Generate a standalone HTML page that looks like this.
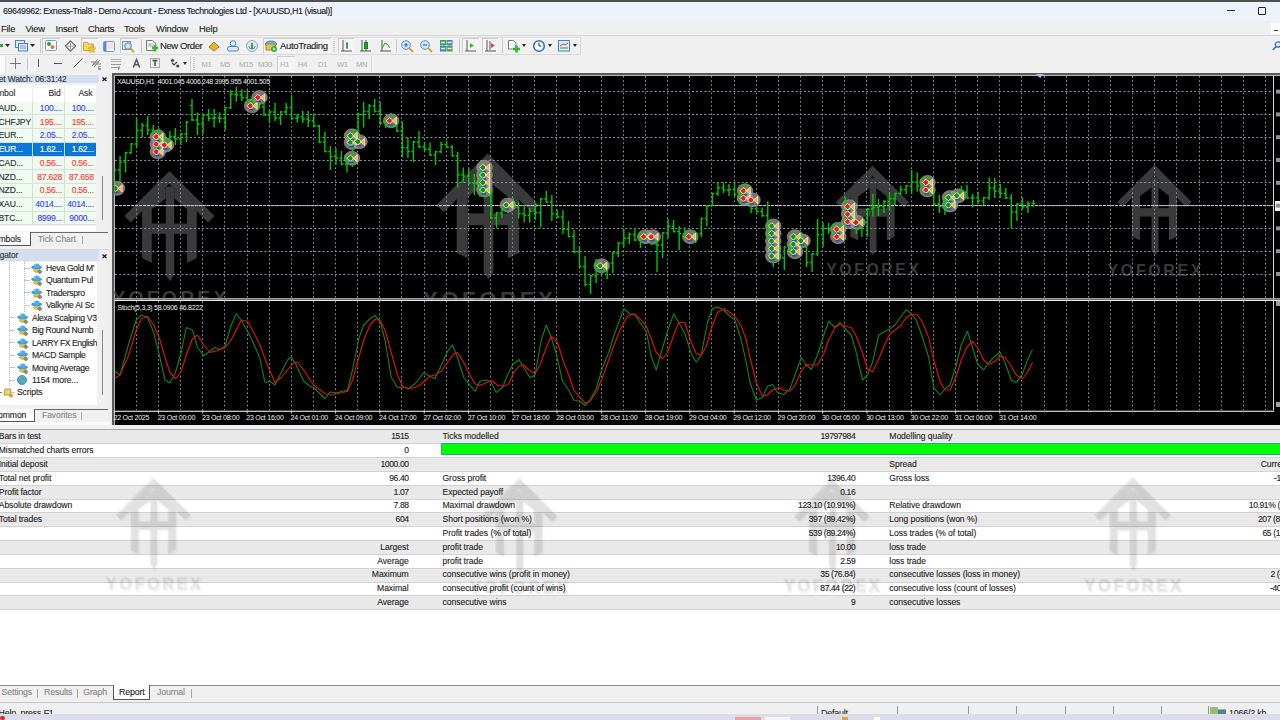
<!DOCTYPE html>
<html><head><meta charset="utf-8">
<style>
*{margin:0;padding:0;box-sizing:border-box}
html,body{width:1280px;height:720px;overflow:hidden;background:#f0f0f0;font-family:"Liberation Sans",sans-serif;color:#1a1a1a;position:relative}
.a{position:absolute;white-space:nowrap;line-height:1;-webkit-text-stroke:0.12px currentColor}
svg{position:absolute;overflow:visible}
</style></head><body>
<div class="a" style="left:0px;top:0px;width:1280px;height:2px;background:#505050;"></div>
<div class="a" style="left:0px;top:2px;width:1280px;height:18.5px;background:#eef2fa;"></div>
<div class="a" style="left:3.00px;top:7.37px;font-size:8.9px;letter-spacing:-0.41px;color:#202020;font-weight:normal;">69649962: Exness-Trial8 - Demo Account - Exness Technologies Ltd - [XAUUSD,H1 (visual)]</div>
<div class="a" style="left:1227px;top:10px;width:7.5px;height:1px;background:#333;"></div>
<div class="a" style="left:1258px;top:7px;width:7.5px;height:7.5px;background:transparent;border:1.3px solid #222;border-radius:1px"></div>
<div class="a" style="left:0px;top:20.5px;width:1280px;height:15px;background:#f0f0f0;"></div>
<div class="a" style="left:1.00px;top:23.54px;font-size:9.4px;letter-spacing:-0.22px;color:#1e1e1e;font-weight:normal;">File</div>
<div class="a" style="left:25.50px;top:23.54px;font-size:9.4px;letter-spacing:-0.22px;color:#1e1e1e;font-weight:normal;">View</div>
<div class="a" style="left:55.50px;top:23.54px;font-size:9.4px;letter-spacing:-0.22px;color:#1e1e1e;font-weight:normal;">Insert</div>
<div class="a" style="left:88.00px;top:23.54px;font-size:9.4px;letter-spacing:-0.22px;color:#1e1e1e;font-weight:normal;">Charts</div>
<div class="a" style="left:124.00px;top:23.54px;font-size:9.4px;letter-spacing:-0.22px;color:#1e1e1e;font-weight:normal;">Tools</div>
<div class="a" style="left:156.00px;top:23.54px;font-size:9.4px;letter-spacing:-0.22px;color:#1e1e1e;font-weight:normal;">Window</div>
<div class="a" style="left:199.00px;top:23.54px;font-size:9.4px;letter-spacing:-0.22px;color:#1e1e1e;font-weight:normal;">Help</div>
<div class="a" style="left:1271px;top:23px;width:9px;height:11px;background:#ffffff;"></div>
<div class="a" style="left:1274px;top:30px;width:4px;height:1px;background:#444;"></div>
<div class="a" style="left:0px;top:35px;width:1280px;height:1px;background:#d6d6d6;"></div>
<div class="a" style="left:0px;top:36px;width:1280px;height:37px;background:#f0f0f0;"></div>
<div class="a" style="left:-2px;top:37px;width:583px;height:18px;background:transparent;border:1px solid #dadada;border-left:none"></div>
<div class="a" style="left:-2px;top:38px;width:582px;height:16px;background:#f0f0f0;border-top:1px solid #fbfbfb"></div>
<div class="a" style="left:0px;top:44px;width:3px;height:3px;background:#3aa63a;"></div>
<svg style="left:5px;top:44px" width="5" height="3" viewBox="0 0 5 3"><path d="M0 0H5L2.5 3Z" fill="#222"/></svg>
<svg style="left:15px;top:40px" width="13" height="12" viewBox="0 0 13 12"><rect x="0.5" y="0.5" width="9" height="7" fill="#dfe9f7" stroke="#4a7fc1"/><rect x="3.5" y="3.5" width="9" height="7.5" fill="#dfe9f7" stroke="#4a7fc1"/><path d="M5 6h6M5 8h6" stroke="#7a9fd0"/></svg>
<svg style="left:30px;top:44px" width="5" height="3" viewBox="0 0 5 3"><path d="M0 0H5L2.5 3Z" fill="#222"/></svg>
<div class="a" style="left:39.5px;top:39px;width:1px;height:14px;background:#c8c8c8;"></div>
<div class="a" style="left:42px;top:38px;width:18px;height:15px;background:#f4f4f4;border-top:1.3px solid #cdcdcd;border-left:1.3px solid #cdcdcd"></div>
<svg style="left:45px;top:40px" width="12" height="11" viewBox="0 0 12 11"><rect x="0.5" y="0.5" width="11" height="10" fill="#fff" stroke="#6b9ad6" rx="1"/><circle cx="4" cy="4" r="2" fill="#2fa02f"/><circle cx="7.5" cy="7" r="2" fill="#e8704a"/></svg>
<svg style="left:64px;top:40px" width="13" height="12" viewBox="0 0 13 12"><path d="M6.5 0.8L11.7 6 6.5 11.2 1.3 6Z" fill="none" stroke="#666" stroke-width="1.1"/><path d="M6.5 2.5v7M3 6h7" stroke="#888" stroke-width=".7"/></svg>
<div class="a" style="left:81px;top:38px;width:17px;height:15px;background:#f4f4f4;border-top:1.3px solid #cdcdcd;border-left:1.3px solid #cdcdcd"></div>
<svg style="left:83px;top:40px" width="13" height="12" viewBox="0 0 13 12"><path d="M0.5 2.5h4l1 1.5h5v6.5h-10z" fill="#f3d86b" stroke="#c9a43a"/><path d="M9 5l1.2 2.6 2.8.3-2.1 1.9.6 2.8L9 11.2l-2.5 1.4.6-2.8-2.1-1.9 2.8-.3z" fill="#f6c62c" stroke="#c99a1a" stroke-width=".6"/></svg>
<svg style="left:103px;top:41px" width="12" height="11" viewBox="0 0 12 11"><rect x="0.5" y="0.5" width="11" height="10" rx="1.2" fill="#fff" stroke="#6a9ad8"/><rect x="1" y="1" width="2.5" height="9" fill="#5a8ad0"/><path d="M4.5 3h6M4.5 5h6M4.5 7h6" stroke="#d8a0a0" stroke-width=".6"/></svg>
<div class="a" style="left:120px;top:38px;width:17.5px;height:15px;background:#f4f4f4;border-top:1.3px solid #cdcdcd;border-left:1.3px solid #cdcdcd"></div>
<svg style="left:122px;top:40px" width="14" height="13" viewBox="0 0 14 13"><rect x="0.5" y="1.5" width="8" height="8" fill="#e9f0fb" stroke="#7a8fb0"/><circle cx="6" cy="6" r="3.3" fill="#cfe3fa" stroke="#4f7fbf"/><path d="M8.5 8.5l3.5 3.5" stroke="#d49b2a" stroke-width="1.8"/></svg>
<div class="a" style="left:140.5px;top:39px;width:1px;height:14px;background:#c8c8c8;"></div>
<svg style="left:146px;top:40px" width="13" height="13" viewBox="0 0 13 13"><path d="M0.5 0.5h6l3 3v7h-9z" fill="#fff" stroke="#777"/><path d="M2 4h5M2 6h5" stroke="#999"/><path d="M6 8h6M9 5v6.5" stroke="#2db82d" stroke-width="2.6"/></svg>
<div class="a" style="left:160.00px;top:41.07px;font-size:9.6px;letter-spacing:-0.45px;color:#1e1e1e;font-weight:normal;">New Order</div>
<svg style="left:208px;top:41px" width="12" height="11" viewBox="0 0 12 11"><path d="M1 6l5-5 5 5-5 4z" fill="#e8b437" stroke="#a97a1e"/></svg>
<svg style="left:227px;top:40px" width="12" height="12" viewBox="0 0 12 12"><circle cx="6" cy="3.5" r="2.8" fill="#dfe9f7" stroke="#4a7fc1"/><rect x="0.5" y="6.5" width="11" height="4.5" rx="2" fill="#dfe9f7" stroke="#4a7fc1"/></svg>
<svg style="left:246px;top:40px" width="12" height="12" viewBox="0 0 12 12"><circle cx="6" cy="6" r="5.5" fill="#dde6f0" stroke="#8fa7c0"/><path d="M6 3v6" stroke="#3aa03a" stroke-width="2"/><path d="M3 6a3 3 0 0 0 6 0" stroke="#4f7fbf" fill="none"/></svg>
<div class="a" style="left:263px;top:38px;width:67.5px;height:15px;background:#f4f4f4;border-top:1.3px solid #cdcdcd;border-left:1.3px solid #cdcdcd"></div>
<svg style="left:265px;top:40px" width="12" height="12" viewBox="0 0 12 12"><ellipse cx="6" cy="4" rx="5.5" ry="3" fill="#6fb6e8" stroke="#3f7fb8"/><rect x="1" y="4" width="9" height="6" fill="#e6c25a" stroke="#a88a2a"/><circle cx="9" cy="9" r="3" fill="#2db82d"/><path d="M8 7.5l2.5 1.5L8 10.5z" fill="#fff"/></svg>
<div class="a" style="left:280.00px;top:41.07px;font-size:9.6px;letter-spacing:-0.38px;color:#1e1e1e;font-weight:normal;">AutoTrading</div>
<svg style="left:333px;top:39px" width="2" height="14" viewBox="0 0 2 14"><path d="M1 0v14" stroke="#b0b0b0" stroke-dasharray="1,1"/></svg>
<div class="a" style="left:337.5px;top:38px;width:16.5px;height:15px;background:#f4f4f4;border-top:1.3px solid #cdcdcd;border-left:1.3px solid #cdcdcd"></div>
<svg style="left:341px;top:40px" width="11" height="12" viewBox="0 0 11 12"><path d="M2 0v11M0 11h11M6 2v7" stroke="#555"/><path d="M6 3v5" stroke="#2a9a2a" stroke-width="1.5"/></svg>
<svg style="left:360px;top:40px" width="11" height="12" viewBox="0 0 11 12"><path d="M2 0v11M0 11h11" stroke="#555"/><rect x="4.5" y="2.5" width="3" height="6" fill="#3cb83c" stroke="#2a7a2a"/><path d="M6 0v11" stroke="#2a7a2a"/></svg>
<svg style="left:380px;top:40px" width="11" height="12" viewBox="0 0 11 12"><path d="M2 0v11M0 11h11" stroke="#555"/><path d="M2 8l3-5 3 2 2 3" stroke="#3aa03a" fill="none"/></svg>
<div class="a" style="left:396px;top:39px;width:1px;height:14px;background:#c8c8c8;"></div>
<svg style="left:401px;top:40px" width="13" height="13" viewBox="0 0 13 13"><circle cx="5" cy="5" r="4.3" fill="#d5e8fb" stroke="#4a8fd6"/><path d="M3 5h4M5 3v4" stroke="#2a6fc0" stroke-width="1.2"/><path d="M8 8l4 4" stroke="#d2a13a" stroke-width="2"/></svg>
<svg style="left:420px;top:40px" width="13" height="13" viewBox="0 0 13 13"><circle cx="5" cy="5" r="4.3" fill="#d5e8fb" stroke="#4a8fd6"/><path d="M3 5h4" stroke="#2a6fc0" stroke-width="1.2"/><path d="M8 8l4 4" stroke="#d2a13a" stroke-width="2"/></svg>
<svg style="left:440px;top:40px" width="13" height="12" viewBox="0 0 13 12"><rect x="0" y="0" width="6" height="5.5" fill="#3aa33a"/><rect x="6.5" y="0" width="6" height="5.5" fill="#3f7fd0"/><rect x="0" y="6" width="6" height="5.5" fill="#3f7fd0"/><rect x="6.5" y="6" width="6" height="5.5" fill="#3aa33a"/><path d="M1 2.5h4M7.5 2.5h4M1 8.5h4M7.5 8.5h4" stroke="#fff" stroke-width="1.4"/></svg>
<div class="a" style="left:458.5px;top:39px;width:1px;height:14px;background:#c8c8c8;"></div>
<div class="a" style="left:462px;top:38px;width:17px;height:15px;background:#f4f4f4;border-top:1.3px solid #cdcdcd;border-left:1.3px solid #cdcdcd"></div>
<svg style="left:465px;top:40px" width="11" height="12" viewBox="0 0 11 12"><path d="M2 0v11M0 11h11" stroke="#555"/><path d="M5 3l4 2.5L5 8z" fill="#2db82d"/></svg>
<div class="a" style="left:481.5px;top:38px;width:16.5px;height:15px;background:#f4f4f4;border-top:1.3px solid #cdcdcd;border-left:1.3px solid #cdcdcd"></div>
<svg style="left:485px;top:40px" width="11" height="12" viewBox="0 0 11 12"><path d="M2 0v11M0 11h11M5 1v9" stroke="#555"/><path d="M6 3l4 2.5L6 8z" fill="#e04040"/></svg>
<div class="a" style="left:501.5px;top:39px;width:1px;height:14px;background:#c8c8c8;"></div>
<svg style="left:508px;top:40px" width="13" height="13" viewBox="0 0 13 13"><path d="M0.5 0.5h5l2.5 2.5v6h-7.5z" fill="#fff" stroke="#777"/><path d="M5 9h7M8.5 5.5v7" stroke="#2db82d" stroke-width="2.6"/></svg>
<svg style="left:522px;top:44px" width="4" height="3" viewBox="0 0 4 3"><path d="M0 0H4L2 3Z" fill="#222"/></svg>
<svg style="left:533px;top:40px" width="12" height="12" viewBox="0 0 12 12"><circle cx="6" cy="6" r="5.3" fill="#fff" stroke="#2f6fc0" stroke-width="1.6"/><path d="M6 2.5V6h2.5" stroke="#333" fill="none"/></svg>
<svg style="left:548px;top:44px" width="4" height="3" viewBox="0 0 4 3"><path d="M0 0H4L2 3Z" fill="#222"/></svg>
<svg style="left:558px;top:40px" width="12" height="12" viewBox="0 0 12 12"><rect x="0.5" y="0.5" width="11" height="10.5" fill="#dbe8f7" stroke="#4a7fc1"/><path d="M2 6l3-2 2 1 3-2" stroke="#e04040" fill="none"/><path d="M2 8h8" stroke="#3aa03a"/></svg>
<svg style="left:573px;top:44px" width="4" height="3" viewBox="0 0 4 3"><path d="M0 0H4L2 3Z" fill="#222"/></svg>
<svg style="left:1272px;top:41px" width="9" height="10" viewBox="0 0 9 10"><circle cx="6" cy="3.5" r="2.7" fill="none" stroke="#3a6fd0" stroke-width="1.3"/><path d="M4 5.5L1 9" stroke="#3a6fd0" stroke-width="1.6"/></svg>
<div class="a" style="left:0px;top:56px;width:5.5px;height:16px;background:#fafafa;border-right:1px solid #e0e0e0"></div>
<svg style="left:10px;top:58px" width="11" height="11" viewBox="0 0 11 11"><path d="M5.5 0v11M0 5.5h11" stroke="#777"/></svg>
<div class="a" style="left:26.5px;top:57px;width:1px;height:14px;background:#c8c8c8;"></div>
<div class="a" style="left:38px;top:59px;width:1px;height:8px;background:#555;"></div>
<div class="a" style="left:54px;top:63px;width:8px;height:1px;background:#555;"></div>
<svg style="left:73px;top:58px" width="10" height="10" viewBox="0 0 10 10"><path d="M0.5 9.5L9.5 0.5" stroke="#555"/></svg>
<svg style="left:91px;top:57px" width="11" height="13" viewBox="0 0 11 13"><path d="M1 9l6-7M3 10l6-7M0 5h8M2 7h8" stroke="#666" stroke-width=".8"/><text x="7" y="12.5" font-size="5" fill="#555" font-family="Liberation Sans">E</text></svg>
<svg style="left:111px;top:58px" width="11" height="12" viewBox="0 0 11 12"><rect x="0" y="1" width="10" height="1" fill="#b0b0b0"/><rect x="0" y="3" width="10" height="1" fill="#b0b0b0"/><rect x="0" y="6" width="10" height="1" fill="#999"/><rect x="0" y="9" width="8" height="1" fill="#999"/><path d="M8.5 8.5l-1 3" stroke="#666"/></svg>
<svg style="left:132.5px;top:59px" width="7" height="9" viewBox="0 0 7 9"><path d="M0.3 8.5L3.5 0.5 6.7 8.5M1.5 5.7h4" fill="none" stroke="#555" stroke-width="1.5"/></svg>
<svg style="left:150px;top:58px" width="10" height="10" viewBox="0 0 10 10"><rect x="0.5" y="0.5" width="9" height="9" fill="none" stroke="#aaa"/><path d="M2.5 2.5h5M5 2.5V8" stroke="#444" stroke-width="1.4"/></svg>
<svg style="left:170px;top:58px" width="10" height="10" viewBox="0 0 10 10"><path d="M2.5 0.5l2 2-2 2-2-2z" fill="#444"/><path d="M2 5l2 2 3-3" fill="none" stroke="#444" stroke-width="1.2"/><circle cx="7.8" cy="8" r="1.6" fill="#444"/></svg>
<svg style="left:183px;top:62px" width="4" height="3" viewBox="0 0 4 3"><path d="M0 0H4L2 3Z" fill="#222"/></svg>
<div class="a" style="left:190.3px;top:56px;width:1px;height:16px;background:#d0d0d0;"></div>
<svg style="left:193px;top:57px" width="2" height="14" viewBox="0 0 2 14"><path d="M1 0v14" stroke="#b0b0b0" stroke-dasharray="1,1"/></svg>
<div class="a" style="left:277px;top:56px;width:17.5px;height:16px;background:#f4f4f4;border-top:1.3px solid #cdcdcd;border-left:1.3px solid #cdcdcd"></div>
<div class="a" style="left:201.50px;top:60.57px;font-size:7.6px;letter-spacing:-0.3px;color:#b4b4b4;font-weight:normal;">M1</div>
<div class="a" style="left:220.00px;top:60.57px;font-size:7.6px;letter-spacing:-0.3px;color:#b4b4b4;font-weight:normal;">M5</div>
<div class="a" style="left:239.00px;top:60.57px;font-size:7.6px;letter-spacing:-0.3px;color:#b4b4b4;font-weight:normal;">M15</div>
<div class="a" style="left:258.00px;top:60.57px;font-size:7.6px;letter-spacing:-0.3px;color:#b4b4b4;font-weight:normal;">M30</div>
<div class="a" style="left:280.00px;top:60.57px;font-size:7.6px;letter-spacing:-0.3px;color:#b4b4b4;font-weight:normal;">H1</div>
<div class="a" style="left:298.00px;top:60.57px;font-size:7.6px;letter-spacing:-0.3px;color:#b4b4b4;font-weight:normal;">H4</div>
<div class="a" style="left:318.00px;top:60.57px;font-size:7.6px;letter-spacing:-0.3px;color:#b4b4b4;font-weight:normal;">D1</div>
<div class="a" style="left:337.00px;top:60.57px;font-size:7.6px;letter-spacing:-0.3px;color:#b4b4b4;font-weight:normal;">W1</div>
<div class="a" style="left:356.00px;top:60.57px;font-size:7.6px;letter-spacing:-0.3px;color:#b4b4b4;font-weight:normal;">MN</div>
<div class="a" style="left:371px;top:56px;width:1px;height:16px;background:#d8d8d8;"></div>
<div class="a" style="left:0px;top:73px;width:112px;height:352px;background:#f0f0f0;"></div>
<div class="a" style="left:108.5px;top:73px;width:3.5px;height:352px;background:#ececec;"></div>
<div class="a" style="left:0px;top:74.8px;width:99px;height:8.5px;background:#d3dff0;"></div>
<div class="a" style="left:-19.30px;top:74.69px;font-size:8.4px;letter-spacing:-0.12px;color:#303030;font-weight:normal;">Market Watch: 06:31:42</div>
<svg style="left:102.4px;top:77px" width="5" height="4.5" viewBox="0 0 5 4.5"><path d="M0.5 0.5l4 3.5M4.5 0.5l-4 3.5" stroke="#111" stroke-width="1.1"/></svg>
<div class="a" style="left:0px;top:85px;width:95.5px;height:16.5px;background:#ffffff;"></div>
<div class="a" style="left:32px;top:85px;width:1px;height:16.5px;background:#ececec;"></div>
<div class="a" style="left:64px;top:85px;width:1px;height:16.5px;background:#ececec;"></div>
<div class="a" style="left:-12.80px;top:88.72px;font-size:8.6px;letter-spacing:-0.1px;color:#303030;font-weight:normal;">Symbol</div>
<div class="a" style="right:1219.40px;top:88.72px;font-size:8.6px;letter-spacing:-0.1px;color:#303030;font-weight:normal;">Bid</div>
<div class="a" style="right:1187.60px;top:88.72px;font-size:8.6px;letter-spacing:-0.1px;color:#303030;font-weight:normal;">Ask</div>
<div class="a" style="left:0px;top:101.6px;width:96px;height:13.75px;background:#eefbee;"></div>
<div class="a" style="left:0px;top:114.35px;width:96px;height:1px;background:#dcdfdc;"></div>
<div class="a" style="left:31.5px;top:101.6px;width:1px;height:13.75px;background:#d8dcd8;"></div>
<div class="a" style="left:63.5px;top:101.6px;width:1px;height:13.75px;background:#d8dcd8;"></div>
<div class="a" style="left:-1.50px;top:103.92px;font-size:8.6px;letter-spacing:-0.15px;color:#303030;font-weight:normal;">AUD...</div>
<div class="a" style="right:1218.00px;top:103.92px;font-size:8.6px;letter-spacing:-0.25px;color:#3d3dff;font-weight:normal;">100....</div>
<div class="a" style="right:1186.20px;top:103.92px;font-size:8.6px;letter-spacing:-0.25px;color:#3d3dff;font-weight:normal;">100....</div>
<div class="a" style="left:0px;top:115.35px;width:96px;height:13.75px;background:#eefbee;"></div>
<div class="a" style="left:0px;top:128.1px;width:96px;height:1px;background:#dcdfdc;"></div>
<div class="a" style="left:31.5px;top:115.35px;width:1px;height:13.75px;background:#d8dcd8;"></div>
<div class="a" style="left:63.5px;top:115.35px;width:1px;height:13.75px;background:#d8dcd8;"></div>
<div class="a" style="left:-1.50px;top:117.67px;font-size:8.6px;letter-spacing:-0.15px;color:#303030;font-weight:normal;">CHFJPY</div>
<div class="a" style="right:1218.00px;top:117.67px;font-size:8.6px;letter-spacing:-0.25px;color:#ff3a3a;font-weight:normal;">195....</div>
<div class="a" style="right:1186.20px;top:117.67px;font-size:8.6px;letter-spacing:-0.25px;color:#ff3a3a;font-weight:normal;">195....</div>
<div class="a" style="left:0px;top:129.1px;width:96px;height:13.75px;background:#eefbee;"></div>
<div class="a" style="left:0px;top:141.85px;width:96px;height:1px;background:#dcdfdc;"></div>
<div class="a" style="left:31.5px;top:129.1px;width:1px;height:13.75px;background:#d8dcd8;"></div>
<div class="a" style="left:63.5px;top:129.1px;width:1px;height:13.75px;background:#d8dcd8;"></div>
<div class="a" style="left:-1.50px;top:131.42px;font-size:8.6px;letter-spacing:-0.15px;color:#303030;font-weight:normal;">EUR...</div>
<div class="a" style="right:1218.00px;top:131.42px;font-size:8.6px;letter-spacing:-0.25px;color:#3d3dff;font-weight:normal;">2.05...</div>
<div class="a" style="right:1186.20px;top:131.42px;font-size:8.6px;letter-spacing:-0.25px;color:#3d3dff;font-weight:normal;">2.05...</div>
<div class="a" style="left:0px;top:142.85px;width:96px;height:13.75px;background:#0a78d7;"></div>
<div class="a" style="left:0px;top:155.6px;width:96px;height:1px;background:#dcdfdc;"></div>
<div class="a" style="left:31.5px;top:142.85px;width:1px;height:13.75px;background:#d8dcd8;"></div>
<div class="a" style="left:63.5px;top:142.85px;width:1px;height:13.75px;background:#d8dcd8;"></div>
<div class="a" style="left:-1.50px;top:145.17px;font-size:8.6px;letter-spacing:-0.15px;color:#ffffff;font-weight:normal;">EUR...</div>
<div class="a" style="right:1218.00px;top:145.17px;font-size:8.6px;letter-spacing:-0.25px;color:#ffffff;font-weight:normal;">1.62...</div>
<div class="a" style="right:1186.20px;top:145.17px;font-size:8.6px;letter-spacing:-0.25px;color:#ffffff;font-weight:normal;">1.62...</div>
<div class="a" style="left:0px;top:156.6px;width:96px;height:13.75px;background:#eefbee;"></div>
<div class="a" style="left:0px;top:169.35px;width:96px;height:1px;background:#dcdfdc;"></div>
<div class="a" style="left:31.5px;top:156.6px;width:1px;height:13.75px;background:#d8dcd8;"></div>
<div class="a" style="left:63.5px;top:156.6px;width:1px;height:13.75px;background:#d8dcd8;"></div>
<div class="a" style="left:-1.50px;top:158.92px;font-size:8.6px;letter-spacing:-0.15px;color:#303030;font-weight:normal;">CAD...</div>
<div class="a" style="right:1218.00px;top:158.92px;font-size:8.6px;letter-spacing:-0.25px;color:#ff3a3a;font-weight:normal;">0.56...</div>
<div class="a" style="right:1186.20px;top:158.92px;font-size:8.6px;letter-spacing:-0.25px;color:#ff3a3a;font-weight:normal;">0.56...</div>
<div class="a" style="left:0px;top:170.35px;width:96px;height:13.75px;background:#eefbee;"></div>
<div class="a" style="left:0px;top:183.1px;width:96px;height:1px;background:#dcdfdc;"></div>
<div class="a" style="left:31.5px;top:170.35px;width:1px;height:13.75px;background:#d8dcd8;"></div>
<div class="a" style="left:63.5px;top:170.35px;width:1px;height:13.75px;background:#d8dcd8;"></div>
<div class="a" style="left:-1.50px;top:172.67px;font-size:8.6px;letter-spacing:-0.15px;color:#303030;font-weight:normal;">NZD...</div>
<div class="a" style="right:1218.00px;top:172.67px;font-size:8.6px;letter-spacing:-0.25px;color:#ff3a3a;font-weight:normal;">87.628</div>
<div class="a" style="right:1186.20px;top:172.67px;font-size:8.6px;letter-spacing:-0.25px;color:#ff3a3a;font-weight:normal;">87.658</div>
<div class="a" style="left:0px;top:184.1px;width:96px;height:13.75px;background:#eefbee;"></div>
<div class="a" style="left:0px;top:196.85px;width:96px;height:1px;background:#dcdfdc;"></div>
<div class="a" style="left:31.5px;top:184.1px;width:1px;height:13.75px;background:#d8dcd8;"></div>
<div class="a" style="left:63.5px;top:184.1px;width:1px;height:13.75px;background:#d8dcd8;"></div>
<div class="a" style="left:-1.50px;top:186.42px;font-size:8.6px;letter-spacing:-0.15px;color:#303030;font-weight:normal;">NZD...</div>
<div class="a" style="right:1218.00px;top:186.42px;font-size:8.6px;letter-spacing:-0.25px;color:#ff3a3a;font-weight:normal;">0.56...</div>
<div class="a" style="right:1186.20px;top:186.42px;font-size:8.6px;letter-spacing:-0.25px;color:#ff3a3a;font-weight:normal;">0.56...</div>
<div class="a" style="left:0px;top:197.85px;width:96px;height:13.75px;background:#eefbee;"></div>
<div class="a" style="left:0px;top:210.6px;width:96px;height:1px;background:#dcdfdc;"></div>
<div class="a" style="left:31.5px;top:197.85px;width:1px;height:13.75px;background:#d8dcd8;"></div>
<div class="a" style="left:63.5px;top:197.85px;width:1px;height:13.75px;background:#d8dcd8;"></div>
<div class="a" style="left:-1.50px;top:200.17px;font-size:8.6px;letter-spacing:-0.15px;color:#303030;font-weight:normal;">XAU...</div>
<div class="a" style="right:1218.00px;top:200.17px;font-size:8.6px;letter-spacing:-0.25px;color:#3d3dff;font-weight:normal;">4014....</div>
<div class="a" style="right:1186.20px;top:200.17px;font-size:8.6px;letter-spacing:-0.25px;color:#3d3dff;font-weight:normal;">4014....</div>
<div class="a" style="left:0px;top:211.6px;width:96px;height:13.75px;background:#eefbee;"></div>
<div class="a" style="left:0px;top:224.35px;width:96px;height:1px;background:#dcdfdc;"></div>
<div class="a" style="left:31.5px;top:211.6px;width:1px;height:13.75px;background:#d8dcd8;"></div>
<div class="a" style="left:63.5px;top:211.6px;width:1px;height:13.75px;background:#d8dcd8;"></div>
<div class="a" style="left:-1.50px;top:213.92px;font-size:8.6px;letter-spacing:-0.15px;color:#303030;font-weight:normal;">BTC...</div>
<div class="a" style="right:1218.00px;top:213.92px;font-size:8.6px;letter-spacing:-0.25px;color:#3d3dff;font-weight:normal;">8999...</div>
<div class="a" style="right:1186.20px;top:213.92px;font-size:8.6px;letter-spacing:-0.25px;color:#3d3dff;font-weight:normal;">9000...</div>
<div class="a" style="left:0px;top:225.7px;width:96px;height:5px;background:#ffffff;"></div>
<div class="a" style="left:102px;top:176px;width:1.2px;height:44px;background:#888;"></div>
<div class="a" style="left:0px;top:232px;width:108px;height:1.1px;background:#6a6a6a;"></div>
<div class="a" style="left:0px;top:249px;width:108.5px;height:1px;background:#d8d8d8;"></div>
<div class="a" style="left:0px;top:232px;width:31px;height:13.5px;background:#ffffff;border:1px solid #555;border-top:none;border-left:none"></div>
<div class="a" style="left:-11.30px;top:235.22px;font-size:8.6px;letter-spacing:-0.1px;color:#1e1e1e;font-weight:normal;">Symbols</div>
<div class="a" style="left:38.00px;top:235.22px;font-size:8.6px;letter-spacing:-0.1px;color:#888;font-weight:normal;">Tick Chart</div>
<div class="a" style="left:82px;top:236px;width:1px;height:8px;background:#aaa;"></div>
<div class="a" style="left:0px;top:250.2px;width:99px;height:9.5px;background:#d3dff0;"></div>
<div class="a" style="left:-16.50px;top:251.39px;font-size:8.4px;letter-spacing:-0.12px;color:#303030;font-weight:normal;">Navigator</div>
<svg style="left:102.4px;top:253.5px" width="5" height="4.5" viewBox="0 0 5 4.5"><path d="M0.5 0.5l4 3.5M4.5 0.5l-4 3.5" stroke="#111" stroke-width="1.1"/></svg>
<div class="a" style="left:0px;top:259.7px;width:99px;height:1.5px;background:#dcdcdc;"></div>
<div class="a" style="left:0px;top:261.5px;width:97px;height:143.5px;background:#ffffff;"></div>
<svg style="left:0px;top:261px" width="40" height="140" viewBox="0 0 40 140"><path d="M9.5 0V126M24.5 0V52" stroke="#b8b8b8" stroke-width="1" stroke-dasharray="1,1"/><path d="M24 7.5h6M24 19.5h6M24 31.5h6M24 44.5h6M9 56.5h6M9 69.5h6M9 81.5h6M9 94.5h6M9 106.5h6M9 119.5h6M9 131.5h6" stroke="#c4c4c4" stroke-width="1"/></svg>
<div class="a" style="left:0;top:261px;width:96.5px;height:144px;overflow:hidden"><div class="a" style="left:0;top:-261px;width:1px;height:1px">
<svg style="left:31px;top:263.0px" width="12" height="11" viewBox="0 0 12 11"><path d="M2.5 8q3 3 6 0l-.5-3h-5z" fill="#e9c23a" stroke="#b0902a" stroke-width=".5"/><ellipse cx="5.6" cy="4.3" rx="5.4" ry="1.9" fill="#3a9ad6"/><ellipse cx="5.6" cy="3" rx="3.1" ry="2.5" fill="#4aaee4"/><path d="M3 2.6q1-1 2-.8" stroke="#bfe4f8" stroke-width=".7" fill="none"/><path d="M8.8 6.6l2.2 2.2-2.2 2.2-2.2-2.2z" fill="#8a8a8a" stroke="#555" stroke-width=".5"/></svg>
<div class="a" style="left:46.00px;top:263.92px;font-size:8.6px;letter-spacing:-0.3px;color:#1e1e1e;font-weight:normal;">Heva Gold M'</div>
<svg style="left:31px;top:275.45px" width="12" height="11" viewBox="0 0 12 11"><path d="M2.5 8q3 3 6 0l-.5-3h-5z" fill="#e9c23a" stroke="#b0902a" stroke-width=".5"/><ellipse cx="5.6" cy="4.3" rx="5.4" ry="1.9" fill="#3a9ad6"/><ellipse cx="5.6" cy="3" rx="3.1" ry="2.5" fill="#4aaee4"/><path d="M3 2.6q1-1 2-.8" stroke="#bfe4f8" stroke-width=".7" fill="none"/><path d="M8.8 6.6l2.2 2.2-2.2 2.2-2.2-2.2z" fill="#8a8a8a" stroke="#555" stroke-width=".5"/></svg>
<div class="a" style="left:46.00px;top:276.37px;font-size:8.6px;letter-spacing:-0.3px;color:#1e1e1e;font-weight:normal;">Quantum Pul</div>
<svg style="left:31px;top:287.9px" width="12" height="11" viewBox="0 0 12 11"><path d="M2.5 8q3 3 6 0l-.5-3h-5z" fill="#e9c23a" stroke="#b0902a" stroke-width=".5"/><ellipse cx="5.6" cy="4.3" rx="5.4" ry="1.9" fill="#3a9ad6"/><ellipse cx="5.6" cy="3" rx="3.1" ry="2.5" fill="#4aaee4"/><path d="M3 2.6q1-1 2-.8" stroke="#bfe4f8" stroke-width=".7" fill="none"/><path d="M8.8 6.6l2.2 2.2-2.2 2.2-2.2-2.2z" fill="#8a8a8a" stroke="#555" stroke-width=".5"/></svg>
<div class="a" style="left:46.00px;top:288.82px;font-size:8.6px;letter-spacing:-0.3px;color:#1e1e1e;font-weight:normal;">Traderspro</div>
<svg style="left:31px;top:300.35px" width="12" height="11" viewBox="0 0 12 11"><path d="M2.5 8q3 3 6 0l-.5-3h-5z" fill="#e9c23a" stroke="#b0902a" stroke-width=".5"/><ellipse cx="5.6" cy="4.3" rx="5.4" ry="1.9" fill="#3a9ad6"/><ellipse cx="5.6" cy="3" rx="3.1" ry="2.5" fill="#4aaee4"/><path d="M3 2.6q1-1 2-.8" stroke="#bfe4f8" stroke-width=".7" fill="none"/><path d="M8.8 6.6l2.2 2.2-2.2 2.2-2.2-2.2z" fill="#8a8a8a" stroke="#555" stroke-width=".5"/></svg>
<div class="a" style="left:46.00px;top:301.27px;font-size:8.6px;letter-spacing:-0.3px;color:#1e1e1e;font-weight:normal;">Valkyrie AI Sc</div>
<svg style="left:17px;top:312.8px" width="12" height="11" viewBox="0 0 12 11"><path d="M2.5 8q3 3 6 0l-.5-3h-5z" fill="#e9c23a" stroke="#b0902a" stroke-width=".5"/><ellipse cx="5.6" cy="4.3" rx="5.4" ry="1.9" fill="#3a9ad6"/><ellipse cx="5.6" cy="3" rx="3.1" ry="2.5" fill="#4aaee4"/><path d="M3 2.6q1-1 2-.8" stroke="#bfe4f8" stroke-width=".7" fill="none"/><path d="M8.8 6.6l2.2 2.2-2.2 2.2-2.2-2.2z" fill="#8a8a8a" stroke="#555" stroke-width=".5"/></svg>
<div class="a" style="left:32.00px;top:313.72px;font-size:8.6px;letter-spacing:-0.3px;color:#1e1e1e;font-weight:normal;">Alexa Scalping V3</div>
<svg style="left:17px;top:325.25px" width="12" height="11" viewBox="0 0 12 11"><path d="M2.5 8q3 3 6 0l-.5-3h-5z" fill="#e9c23a" stroke="#b0902a" stroke-width=".5"/><ellipse cx="5.6" cy="4.3" rx="5.4" ry="1.9" fill="#3a9ad6"/><ellipse cx="5.6" cy="3" rx="3.1" ry="2.5" fill="#4aaee4"/><path d="M3 2.6q1-1 2-.8" stroke="#bfe4f8" stroke-width=".7" fill="none"/><path d="M8.8 6.6l2.2 2.2-2.2 2.2-2.2-2.2z" fill="#8a8a8a" stroke="#555" stroke-width=".5"/></svg>
<div class="a" style="left:32.00px;top:326.17px;font-size:8.6px;letter-spacing:-0.3px;color:#1e1e1e;font-weight:normal;">Big Round Numb</div>
<svg style="left:17px;top:337.7px" width="12" height="11" viewBox="0 0 12 11"><path d="M2.5 8q3 3 6 0l-.5-3h-5z" fill="#e9c23a" stroke="#b0902a" stroke-width=".5"/><ellipse cx="5.6" cy="4.3" rx="5.4" ry="1.9" fill="#3a9ad6"/><ellipse cx="5.6" cy="3" rx="3.1" ry="2.5" fill="#4aaee4"/><path d="M3 2.6q1-1 2-.8" stroke="#bfe4f8" stroke-width=".7" fill="none"/><path d="M8.8 6.6l2.2 2.2-2.2 2.2-2.2-2.2z" fill="#8a8a8a" stroke="#555" stroke-width=".5"/></svg>
<div class="a" style="left:32.00px;top:338.62px;font-size:8.6px;letter-spacing:-0.45px;color:#1e1e1e;font-weight:normal;">LARRY FX English</div>
<svg style="left:17px;top:350.15px" width="12" height="11" viewBox="0 0 12 11"><path d="M2.5 8q3 3 6 0l-.5-3h-5z" fill="#e9c23a" stroke="#b0902a" stroke-width=".5"/><ellipse cx="5.6" cy="4.3" rx="5.4" ry="1.9" fill="#3a9ad6"/><ellipse cx="5.6" cy="3" rx="3.1" ry="2.5" fill="#4aaee4"/><path d="M3 2.6q1-1 2-.8" stroke="#bfe4f8" stroke-width=".7" fill="none"/><path d="M8.8 6.6l2.2 2.2-2.2 2.2-2.2-2.2z" fill="#8a8a8a" stroke="#555" stroke-width=".5"/></svg>
<div class="a" style="left:32.00px;top:351.07px;font-size:8.6px;letter-spacing:-0.3px;color:#1e1e1e;font-weight:normal;">MACD Sample</div>
<svg style="left:17px;top:362.6px" width="12" height="11" viewBox="0 0 12 11"><path d="M2.5 8q3 3 6 0l-.5-3h-5z" fill="#e9c23a" stroke="#b0902a" stroke-width=".5"/><ellipse cx="5.6" cy="4.3" rx="5.4" ry="1.9" fill="#3a9ad6"/><ellipse cx="5.6" cy="3" rx="3.1" ry="2.5" fill="#4aaee4"/><path d="M3 2.6q1-1 2-.8" stroke="#bfe4f8" stroke-width=".7" fill="none"/><path d="M8.8 6.6l2.2 2.2-2.2 2.2-2.2-2.2z" fill="#8a8a8a" stroke="#555" stroke-width=".5"/></svg>
<div class="a" style="left:32.00px;top:363.52px;font-size:8.6px;letter-spacing:-0.3px;color:#1e1e1e;font-weight:normal;">Moving Average</div>
<svg style="left:17px;top:375.05px" width="10" height="10" viewBox="0 0 10 10"><circle cx="5" cy="5" r="4.6" fill="#4aa0e8" stroke="#2a6aa8" stroke-width=".6"/><path d="M2 3q2 0 2.5 2t2 1q1.5 1 .5 3M6 1q1 2 3 2" stroke="#6bc04a" stroke-width="1.3" fill="none"/></svg>
<div class="a" style="left:32.00px;top:375.97px;font-size:8.6px;letter-spacing:-0.12px;color:#1e1e1e;font-weight:normal;">1154 more...</div>
<svg style="left:3px;top:387.5px" width="11" height="10" viewBox="0 0 11 10"><path d="M2 1h6l-1 6h-6z" fill="#f0d070" stroke="#b08a2a" stroke-width=".8"/><circle cx="8" cy="7.5" r="2" fill="#d0a030"/></svg>
<div class="a" style="left:0px;top:391.5px;width:2px;height:1px;background:#777;"></div>
<div class="a" style="left:17.00px;top:388.42px;font-size:8.6px;letter-spacing:-0.12px;color:#1e1e1e;font-weight:normal;">Scripts</div>
</div></div>
<div class="a" style="left:102px;top:330px;width:1.2px;height:65px;background:#888;"></div>
<div class="a" style="left:0px;top:405px;width:108.5px;height:20px;background:#f0f0f0;"></div>
<div class="a" style="left:0px;top:422.4px;width:110px;height:2.3px;background:#fafafa;"></div>
<div class="a" style="left:0px;top:408.5px;width:108px;height:1px;background:#646464;"></div>
<div class="a" style="left:0px;top:408.5px;width:34.5px;height:13px;background:#ffffff;border:1px solid #555;border-top:none;border-left:none"></div>
<div class="a" style="left:-8.00px;top:411.22px;font-size:8.6px;letter-spacing:-0.1px;color:#1e1e1e;font-weight:normal;">Common</div>
<div class="a" style="left:42.00px;top:411.22px;font-size:8.6px;letter-spacing:-0.1px;color:#888;font-weight:normal;">Favorites</div>
<div class="a" style="left:81px;top:412px;width:1px;height:8px;background:#aaa;"></div>
<svg style="left:112px;top:73px" width="1168" height="352" viewBox="0 0 1168 352">
<defs><clipPath id="cm"><rect x="2.5" y="2.5" width="1159" height="225"/></clipPath><clipPath id="ci"><rect x="2.5" y="228" width="1159" height="109.5"/></clipPath></defs>
<rect x="0" y="0" width="1168" height="352" fill="#000"/>
<rect x="0" y="0" width="1168" height="2" fill="#5a5a5a"/>
<rect x="0" y="0" width="2" height="352" fill="#5a5a5a"/>
<path d="M2.5,2.5 H1168 M2.5,2.5 V352" stroke="#b8b8b8" stroke-width="1"/>
<g clip-path="url(#cm)">
<g transform="translate(57.40,97.70) scale(1.214)" fill="#3a3a3a" stroke="none"><path d="M-34.5,40 L0,5.5 L34.5,40" fill="none" stroke="#3a3a3a" stroke-width="7.5" stroke-linejoin="miter"/><path d="M-22.5,72 L-22.5,28 L-3,14 L-3,23 L-14.5,31.5 L-14.5,76 Z"/><path d="M22.5,72 L22.5,28 L4,14 L4,23 L14.5,31.5 L14.5,76 Z"/><path d="M-3,13 L4,13 L4,86 L0.5,91 L-3,86 Z"/><rect x="-15" y="43.5" width="30" height="8.5"/><text x="-47" y="111" font-family="Liberation Sans" font-size="16" font-weight="bold" stroke="#3a3a3a" stroke-width="0" textLength="94" lengthAdjust="spacing">YOFOREX</text></g>
<g transform="translate(375.80,80.30) scale(1.383)" fill="#3a3a3a" stroke="none"><path d="M-34.5,40 L0,5.5 L34.5,40" fill="none" stroke="#3a3a3a" stroke-width="7.5" stroke-linejoin="miter"/><path d="M-22.5,72 L-22.5,28 L-3,14 L-3,23 L-14.5,31.5 L-14.5,76 Z"/><path d="M22.5,72 L22.5,28 L4,14 L4,23 L14.5,31.5 L14.5,76 Z"/><path d="M-3,13 L4,13 L4,86 L0.5,91 L-3,86 Z"/><rect x="-15" y="43.5" width="30" height="8.5"/><text x="-47" y="111" font-family="Liberation Sans" font-size="16" font-weight="bold" stroke="#3a3a3a" stroke-width="0" textLength="94" lengthAdjust="spacing">YOFOREX</text></g>
<g transform="translate(760.50,92.50) scale(0.986)" fill="#3a3a3a" stroke="none"><path d="M-34.5,40 L0,5.5 L34.5,40" fill="none" stroke="#3a3a3a" stroke-width="7.5" stroke-linejoin="miter"/><path d="M-22.5,72 L-22.5,28 L-3,14 L-3,23 L-14.5,31.5 L-14.5,76 Z"/><path d="M22.5,72 L22.5,28 L4,14 L4,23 L14.5,31.5 L14.5,76 Z"/><path d="M-3,13 L4,13 L4,86 L0.5,91 L-3,86 Z"/><rect x="-15" y="43.5" width="30" height="8.5"/><text x="-47" y="111" font-family="Liberation Sans" font-size="16" font-weight="bold" stroke="#3a3a3a" stroke-width="0" textLength="94" lengthAdjust="spacing">YOFOREX</text></g>
<g transform="translate(1042.50,91.60) scale(1.0)" fill="#3a3a3a" stroke="none"><path d="M-34.5,40 L0,5.5 L34.5,40" fill="none" stroke="#3a3a3a" stroke-width="7.5" stroke-linejoin="miter"/><path d="M-22.5,72 L-22.5,28 L-3,14 L-3,23 L-14.5,31.5 L-14.5,76 Z"/><path d="M22.5,72 L22.5,28 L4,14 L4,23 L14.5,31.5 L14.5,76 Z"/><path d="M-3,13 L4,13 L4,86 L0.5,91 L-3,86 Z"/><rect x="-15" y="43.5" width="30" height="8.5"/><text x="-47" y="111" font-family="Liberation Sans" font-size="16" font-weight="bold" stroke="#3a3a3a" stroke-width="0" textLength="94" lengthAdjust="spacing">YOFOREX</text></g>
<path d="M24.50,3V225.5M46.50,3V225.5M68.50,3V225.5M90.50,3V225.5M112.50,3V225.5M135.50,3V225.5M157.50,3V225.5M179.50,3V225.5M201.50,3V225.5M223.50,3V225.5M245.50,3V225.5M267.50,3V225.5M289.50,3V225.5M312.50,3V225.5M334.50,3V225.5M356.50,3V225.5M378.50,3V225.5M400.50,3V225.5M422.50,3V225.5M444.50,3V225.5M467.50,3V225.5M489.50,3V225.5M511.50,3V225.5M533.50,3V225.5M555.50,3V225.5M577.50,3V225.5M599.50,3V225.5M622.50,3V225.5M644.50,3V225.5M666.50,3V225.5M688.50,3V225.5M710.50,3V225.5M732.50,3V225.5M754.50,3V225.5M777.50,3V225.5M799.50,3V225.5M821.50,3V225.5M843.50,3V225.5M865.50,3V225.5M887.50,3V225.5M909.50,3V225.5M932.50,3V225.5M954.50,3V225.5M976.50,3V225.5M998.50,3V225.5M1020.50,3V225.5M1042.50,3V225.5M1064.50,3V225.5M1087.50,3V225.5M1109.50,3V225.5M1131.50,3V225.5M1153.50,3V225.5" stroke="#8390a0" stroke-width="1" stroke-dasharray="1.7,2.45" fill="none"/>
<path d="M3,18.50H1161M3,41.50H1161M3,64.50H1161M3,87.50H1161M3,109.50H1161M3,132.50H1161M3,155.50H1161M3,178.50H1161M3,201.50H1161" stroke="#8390a0" stroke-width="1" stroke-dasharray="2.1,2.05" fill="none"/>
<path d="M3,132.60H1161" stroke="#c8cdd4" stroke-width="1" stroke-dasharray="3,1" fill="none"/>
<ellipse cx="5.00" cy="115.30" rx="7.8" ry="7" fill="#9c8a7a" fill-opacity="0.82" stroke="#9aaac0" stroke-opacity="0.7" stroke-width=".8"/><ellipse cx="45.80" cy="63.70" rx="7.8" ry="7" fill="#9c8a7a" fill-opacity="0.82" stroke="#9aaac0" stroke-opacity="0.7" stroke-width=".8"/><ellipse cx="45.80" cy="71.20" rx="7.8" ry="7" fill="#9c8a7a" fill-opacity="0.82" stroke="#9aaac0" stroke-opacity="0.7" stroke-width=".8"/><ellipse cx="45.80" cy="78.70" rx="7.8" ry="7" fill="#9c8a7a" fill-opacity="0.82" stroke="#9aaac0" stroke-opacity="0.7" stroke-width=".8"/><ellipse cx="54.00" cy="72.00" rx="7.8" ry="7" fill="#9c8a7a" fill-opacity="0.82" stroke="#9aaac0" stroke-opacity="0.7" stroke-width=".8"/><ellipse cx="140.00" cy="32.80" rx="7.8" ry="7" fill="#9c8a7a" fill-opacity="0.82" stroke="#9aaac0" stroke-opacity="0.7" stroke-width=".8"/><ellipse cx="147.50" cy="24.50" rx="7.8" ry="7" fill="#9c8a7a" fill-opacity="0.82" stroke="#9aaac0" stroke-opacity="0.7" stroke-width=".8"/><ellipse cx="240.00" cy="62.80" rx="7.8" ry="7" fill="#9c8a7a" fill-opacity="0.82" stroke="#9aaac0" stroke-opacity="0.7" stroke-width=".8"/><ellipse cx="240.00" cy="69.50" rx="7.8" ry="7" fill="#9c8a7a" fill-opacity="0.82" stroke="#9aaac0" stroke-opacity="0.7" stroke-width=".8"/><ellipse cx="240.00" cy="85.30" rx="7.8" ry="7" fill="#9c8a7a" fill-opacity="0.82" stroke="#9aaac0" stroke-opacity="0.7" stroke-width=".8"/><ellipse cx="247.50" cy="68.70" rx="7.8" ry="7" fill="#9c8a7a" fill-opacity="0.82" stroke="#9aaac0" stroke-opacity="0.7" stroke-width=".8"/><ellipse cx="279.20" cy="47.80" rx="7.8" ry="7" fill="#9c8a7a" fill-opacity="0.82" stroke="#9aaac0" stroke-opacity="0.7" stroke-width=".8"/><ellipse cx="372.50" cy="94.50" rx="7.8" ry="7" fill="#9c8a7a" fill-opacity="0.82" stroke="#9aaac0" stroke-opacity="0.7" stroke-width=".8"/><ellipse cx="372.50" cy="102.00" rx="7.8" ry="7" fill="#9c8a7a" fill-opacity="0.82" stroke="#9aaac0" stroke-opacity="0.7" stroke-width=".8"/><ellipse cx="372.50" cy="109.50" rx="7.8" ry="7" fill="#9c8a7a" fill-opacity="0.82" stroke="#9aaac0" stroke-opacity="0.7" stroke-width=".8"/><ellipse cx="372.50" cy="117.00" rx="7.8" ry="7" fill="#9c8a7a" fill-opacity="0.82" stroke="#9aaac0" stroke-opacity="0.7" stroke-width=".8"/><ellipse cx="395.80" cy="132.00" rx="7.8" ry="7" fill="#9c8a7a" fill-opacity="0.82" stroke="#9aaac0" stroke-opacity="0.7" stroke-width=".8"/><ellipse cx="489.70" cy="192.80" rx="7.8" ry="7" fill="#9c8a7a" fill-opacity="0.82" stroke="#9aaac0" stroke-opacity="0.7" stroke-width=".8"/><ellipse cx="533.30" cy="163.70" rx="7.8" ry="7" fill="#9c8a7a" fill-opacity="0.82" stroke="#9aaac0" stroke-opacity="0.7" stroke-width=".8"/><ellipse cx="540.80" cy="163.70" rx="7.8" ry="7" fill="#9c8a7a" fill-opacity="0.82" stroke="#9aaac0" stroke-opacity="0.7" stroke-width=".8"/><ellipse cx="578.30" cy="163.70" rx="7.8" ry="7" fill="#9c8a7a" fill-opacity="0.82" stroke="#9aaac0" stroke-opacity="0.7" stroke-width=".8"/><ellipse cx="633.00" cy="117.80" rx="7.8" ry="7" fill="#9c8a7a" fill-opacity="0.82" stroke="#9aaac0" stroke-opacity="0.7" stroke-width=".8"/><ellipse cx="633.00" cy="125.30" rx="7.8" ry="7" fill="#9c8a7a" fill-opacity="0.82" stroke="#9aaac0" stroke-opacity="0.7" stroke-width=".8"/><ellipse cx="640.50" cy="127.00" rx="7.8" ry="7" fill="#9c8a7a" fill-opacity="0.82" stroke="#9aaac0" stroke-opacity="0.7" stroke-width=".8"/><ellipse cx="661.30" cy="153.00" rx="7.8" ry="7" fill="#9c8a7a" fill-opacity="0.82" stroke="#9aaac0" stroke-opacity="0.7" stroke-width=".8"/><ellipse cx="661.30" cy="160.50" rx="7.8" ry="7" fill="#9c8a7a" fill-opacity="0.82" stroke="#9aaac0" stroke-opacity="0.7" stroke-width=".8"/><ellipse cx="661.30" cy="168.00" rx="7.8" ry="7" fill="#9c8a7a" fill-opacity="0.82" stroke="#9aaac0" stroke-opacity="0.7" stroke-width=".8"/><ellipse cx="661.30" cy="175.50" rx="7.8" ry="7" fill="#9c8a7a" fill-opacity="0.82" stroke="#9aaac0" stroke-opacity="0.7" stroke-width=".8"/><ellipse cx="661.30" cy="183.00" rx="7.8" ry="7" fill="#9c8a7a" fill-opacity="0.82" stroke="#9aaac0" stroke-opacity="0.7" stroke-width=".8"/><ellipse cx="683.00" cy="163.70" rx="7.8" ry="7" fill="#9c8a7a" fill-opacity="0.82" stroke="#9aaac0" stroke-opacity="0.7" stroke-width=".8"/><ellipse cx="683.00" cy="171.20" rx="7.8" ry="7" fill="#9c8a7a" fill-opacity="0.82" stroke="#9aaac0" stroke-opacity="0.7" stroke-width=".8"/><ellipse cx="683.00" cy="178.70" rx="7.8" ry="7" fill="#9c8a7a" fill-opacity="0.82" stroke="#9aaac0" stroke-opacity="0.7" stroke-width=".8"/><ellipse cx="690.50" cy="167.80" rx="7.8" ry="7" fill="#9c8a7a" fill-opacity="0.82" stroke="#9aaac0" stroke-opacity="0.7" stroke-width=".8"/><ellipse cx="737.20" cy="133.70" rx="7.8" ry="7" fill="#9c8a7a" fill-opacity="0.82" stroke="#9aaac0" stroke-opacity="0.7" stroke-width=".8"/><ellipse cx="737.20" cy="141.20" rx="7.8" ry="7" fill="#9c8a7a" fill-opacity="0.82" stroke="#9aaac0" stroke-opacity="0.7" stroke-width=".8"/><ellipse cx="737.20" cy="148.70" rx="7.8" ry="7" fill="#9c8a7a" fill-opacity="0.82" stroke="#9aaac0" stroke-opacity="0.7" stroke-width=".8"/><ellipse cx="745.50" cy="149.50" rx="7.8" ry="7" fill="#9c8a7a" fill-opacity="0.82" stroke="#9aaac0" stroke-opacity="0.7" stroke-width=".8"/><ellipse cx="726.30" cy="156.20" rx="7.8" ry="7" fill="#9c8a7a" fill-opacity="0.82" stroke="#9aaac0" stroke-opacity="0.7" stroke-width=".8"/><ellipse cx="726.30" cy="163.70" rx="7.8" ry="7" fill="#9c8a7a" fill-opacity="0.82" stroke="#9aaac0" stroke-opacity="0.7" stroke-width=".8"/><ellipse cx="815.50" cy="109.50" rx="7.8" ry="7" fill="#9c8a7a" fill-opacity="0.82" stroke="#9aaac0" stroke-opacity="0.7" stroke-width=".8"/><ellipse cx="815.50" cy="117.00" rx="7.8" ry="7" fill="#9c8a7a" fill-opacity="0.82" stroke="#9aaac0" stroke-opacity="0.7" stroke-width=".8"/><ellipse cx="838.00" cy="124.50" rx="7.8" ry="7" fill="#9c8a7a" fill-opacity="0.82" stroke="#9aaac0" stroke-opacity="0.7" stroke-width=".8"/><ellipse cx="838.00" cy="132.00" rx="7.8" ry="7" fill="#9c8a7a" fill-opacity="0.82" stroke="#9aaac0" stroke-opacity="0.7" stroke-width=".8"/><ellipse cx="846.30" cy="122.80" rx="7.8" ry="7" fill="#9c8a7a" fill-opacity="0.82" stroke="#9aaac0" stroke-opacity="0.7" stroke-width=".8"/>
<path d="M2.50,96.00V122.00M0.50,106.25H2.50M2.50,97.00H4.50M8.04,83.00V109.00M6.04,97.00H8.04M8.04,89.10H10.04M13.57,78.70V99.50M11.57,89.10H13.57M13.57,79.70H15.57M19.11,70.00V81.00M17.11,79.70H19.11M19.11,71.00H21.11M24.64,44.50V74.50M22.64,71.00H24.64M24.64,57.50H26.64M30.18,50.00V65.00M28.18,57.50H30.18M30.18,52.50H32.18M35.72,43.00V62.00M33.72,52.50H35.72M35.72,57.00H37.72M41.25,52.00V62.00M39.25,57.00H41.25M41.25,61.00H43.25M46.79,55.00V79.00M44.79,61.00H46.79M46.79,68.50H48.79M52.32,60.00V77.00M50.32,68.50H52.32M52.32,67.50H54.32M57.86,58.00V77.00M55.86,67.50H57.86M57.86,63.50H59.86M63.40,55.00V72.00M61.40,63.50H63.40M63.40,66.00H65.40M68.93,60.00V72.00M66.93,66.00H68.93M68.93,61.00H70.93M74.47,48.00V69.00M72.47,61.00H74.47M74.47,49.00H76.47M80.00,26.00V48.00M78.00,32.39H80.00M80.00,47.00H82.00M85.54,39.50V62.00M83.54,47.00H85.54M85.54,51.00H87.54M91.08,41.00V61.00M89.08,51.00H91.08M91.08,42.00H93.08M96.61,36.00V48.00M94.61,42.00H96.61M96.61,45.25H98.61M102.15,36.00V54.50M100.15,45.25H102.15M102.15,44.75H104.15M107.68,39.50V50.00M105.68,44.75H107.68M107.68,45.35H109.68M113.22,33.70V57.00M111.22,45.35H113.22M113.22,34.70H115.22M118.76,17.00V36.00M116.76,34.70H118.76M118.76,21.20H120.76M124.29,13.70V28.70M122.29,21.20H124.29M124.29,22.00H126.29M129.83,16.00V28.00M127.83,22.00H129.83M129.83,24.50H131.83M135.36,17.00V32.00M133.36,24.50H135.36M135.36,29.50H137.36M140.90,22.00V37.00M138.90,29.50H140.90M140.90,29.00H142.90M146.44,23.00V35.00M144.44,29.00H146.44M146.44,34.00H148.44M151.97,28.70V43.00M149.97,34.00H151.97M151.97,42.00H153.97M157.51,36.00V50.00M155.51,42.00H157.51M157.51,39.00H159.51M163.04,30.00V48.00M161.04,39.00H163.04M163.04,45.00H165.04M168.58,38.00V52.00M166.58,45.00H168.58M168.58,39.00H170.58M174.12,30.00V42.00M172.12,39.00H174.12M174.12,34.50H176.12M179.65,22.00V47.00M177.65,34.50H179.65M179.65,45.25H181.65M185.19,41.00V49.50M183.19,45.25H185.19M185.19,44.00H187.19M190.72,38.00V50.00M188.72,44.00H190.72M190.72,46.00H192.72M196.26,38.00V54.00M194.26,46.00H196.26M196.26,47.50H198.26M201.80,41.00V54.00M199.80,47.50H201.80M201.80,53.00H203.80M207.33,52.00V70.00M205.33,53.00H207.33M207.33,69.00H209.33M212.87,59.00V79.50M210.87,69.00H212.87M212.87,78.50H214.87M218.40,73.00V97.00M216.40,78.50H218.40M218.40,83.50H220.40M223.94,75.00V92.00M221.94,83.50H223.94M223.94,85.00H225.94M229.48,78.00V92.00M227.48,85.00H229.48M229.48,91.00H231.48M235.01,83.00V99.50M233.01,91.00H235.01M235.01,84.00H237.01M240.55,57.00V94.00M238.55,84.00H240.55M240.55,58.00H242.55M246.08,39.50V72.00M244.08,58.00H246.08M246.08,41.60H248.08M251.62,28.70V54.50M249.62,41.60H251.62M251.62,38.50H253.62M257.16,31.00V46.00M255.16,38.50H257.16M257.16,32.75H259.16M262.69,26.00V39.50M260.69,32.75H262.69M262.69,38.50H264.69M268.23,28.70V52.00M266.23,38.50H268.23M268.23,50.00H270.23M273.76,45.00V55.00M271.76,50.00H273.76M273.76,47.25H275.76M279.30,40.00V54.50M277.30,47.25H279.30M279.30,52.00H281.30M284.84,45.00V59.00M282.84,52.00H284.84M284.84,58.00H286.84M290.37,48.70V84.50M288.37,58.00H290.37M290.37,74.75H292.37M295.91,64.50V85.00M293.91,74.75H295.91M295.91,78.50H297.91M301.44,68.00V89.00M299.44,78.50H301.44M301.44,69.00H303.44M306.98,58.00V75.00M304.98,69.00H306.98M306.98,73.70H308.98M312.52,68.70V78.70M310.52,73.70H312.52M312.52,76.25H314.52M318.05,69.50V83.00M316.05,76.25H318.05M318.05,82.00H320.05M323.59,77.80V92.00M321.59,82.00H323.59M323.59,78.80H325.59M329.12,68.70V80.30M327.12,78.80H329.12M329.12,71.55H331.12M334.66,67.80V75.30M332.66,71.55H334.66M334.66,74.30H336.66M340.20,72.00V83.70M338.20,74.30H340.20M340.20,82.70H342.20M345.73,78.70V114.50M343.73,82.70H345.73M345.73,102.00H347.73M351.27,94.50V109.50M349.27,102.00H351.27M351.27,103.00H353.27M356.80,95.00V111.00M354.80,103.00H356.80M356.80,110.00H358.80M362.34,101.00V122.00M360.34,110.00H362.34M362.34,110.50H364.34M367.88,97.00V124.00M365.88,110.50H367.88M367.88,117.00H369.88M373.41,110.00V124.00M371.41,117.00H373.41M373.41,123.00H375.41M378.95,115.00V146.00M376.95,123.00H378.95M378.95,145.00H380.95M384.48,138.70V155.00M382.48,145.00H384.48M384.48,140.00H386.48M390.02,135.00V145.00M388.02,140.00H390.02M390.02,136.00H392.02M395.56,130.00V140.00M393.56,136.00H395.56M395.56,131.00H397.56M401.09,125.00V135.00M399.09,131.00H401.09M401.09,134.00H403.09M406.63,128.70V145.00M404.63,134.00H406.63M406.63,140.75H408.63M412.16,132.00V149.50M410.16,140.75H412.16M412.16,142.25H414.16M417.70,135.00V149.50M415.70,142.25H417.70M417.70,138.50H419.70M423.24,130.00V147.00M421.24,138.50H423.24M423.24,139.75H425.24M428.77,125.00V154.50M426.77,139.75H428.77M428.77,126.00H430.77M434.31,118.00V130.00M432.31,126.00H434.31M434.31,129.00H436.31M439.84,122.00V148.00M437.84,129.00H439.84M439.84,141.00H441.84M445.38,137.00V145.00M443.38,141.00H445.38M445.38,144.00H447.38M450.92,137.00V161.00M448.92,144.00H450.92M450.92,156.25H452.92M456.45,148.00V164.50M454.45,156.25H456.45M456.45,163.50H458.45M461.99,157.00V180.00M459.99,163.50H461.99M461.99,179.00H463.99M467.52,173.00V194.50M465.52,179.00H467.52M467.52,193.50H469.52M473.06,183.00V213.00M471.06,193.50H473.06M473.06,211.50H475.06M478.60,202.00V221.00M476.60,211.50H478.60M478.60,203.00H480.60M484.13,186.00V210.00M482.13,203.00H484.13M484.13,195.50H486.13M489.67,189.00V202.00M487.67,195.50H489.67M489.67,197.50H491.67M495.20,189.00V206.00M493.20,197.50H495.20M495.20,190.00H497.20M500.74,179.00V200.00M498.74,190.00H500.74M500.74,180.00H502.74M506.28,169.00V184.00M504.28,180.00H506.28M506.28,170.00H508.28M511.81,156.00V174.00M509.81,170.00H511.81M511.81,165.25H513.81M517.35,159.50V171.00M515.35,165.25H517.35M517.35,161.50H519.35M522.88,155.00V168.00M520.88,161.50H522.88M522.88,167.00H524.88M528.42,159.00V175.00M526.42,167.00H528.42M528.42,164.00H530.42M533.96,159.00V169.00M531.96,164.00H533.96M533.96,166.00H535.96M539.49,160.00V172.00M537.49,166.00H539.49M539.49,171.00H541.49M545.03,167.00V199.00M543.03,171.00H545.03M545.03,172.00H547.03M550.56,159.00V185.00M548.56,172.00H550.56M550.56,160.00H552.56M556.10,146.00V165.00M554.10,160.00H556.10M556.10,153.25H558.10M561.64,147.00V159.50M559.64,153.25H561.64M561.64,158.50H563.64M567.17,153.00V177.00M565.17,158.50H567.17M567.17,160.75H569.17M572.71,154.50V167.00M570.71,160.75H572.71M572.71,163.00H574.71M578.24,157.00V169.00M576.24,163.00H578.24M578.24,164.75H580.24M583.78,159.50V170.00M581.78,164.75H583.78M583.78,160.50H585.78M589.32,144.50V164.00M587.32,160.50H589.32M589.32,145.50H591.32M594.85,132.00V153.00M592.85,145.50H594.85M594.85,133.00H596.85M600.39,119.50V133.00M598.39,133.00H600.39M600.39,120.50H602.39M605.92,109.50V123.00M603.92,120.50H605.92M605.92,114.75H607.92M611.46,109.50V120.00M609.46,114.75H611.46M611.46,117.00H613.46M617.00,111.00V123.00M615.00,117.00H617.00M617.00,116.60H619.00M622.53,109.50V123.70M620.53,116.60H622.53M622.53,121.50H624.53M628.07,112.00V131.00M626.07,121.50H628.07M628.07,120.00H630.07M633.60,110.00V130.00M631.60,120.00H633.60M633.60,129.00H635.60M639.14,127.00V140.00M637.14,129.00H639.14M639.14,135.75H641.14M644.68,132.00V139.50M642.68,135.75H644.68M644.68,138.50H646.68M650.21,134.50V143.70M648.21,138.50H650.21M650.21,142.70H652.21M655.75,128.00V165.00M653.75,142.70H655.75M655.75,164.00H657.75M661.28,149.00V194.00M659.28,164.00H661.28M661.28,178.85H663.28M666.82,168.70V189.00M664.82,178.85H666.82M666.82,185.00H668.82M672.36,173.00V197.00M670.36,185.00H672.36M672.36,174.10H674.36M677.89,168.70V179.50M675.89,174.10H677.89M677.89,172.00H679.89M683.43,159.00V185.00M681.43,172.00H683.43M683.43,167.00H685.43M688.96,159.00V175.00M686.96,167.00H688.96M688.96,174.00H690.96M694.50,173.00V194.00M692.50,174.00H694.50M694.50,189.50H696.50M700.04,180.00V199.00M698.04,189.50H700.04M700.04,181.00H702.04M705.57,146.00V183.00M703.57,181.00H705.57M705.57,161.60H707.57M711.11,149.50V173.70M709.11,161.60H711.11M711.11,155.50H713.11M716.64,150.00V161.00M714.64,155.50H716.64M716.64,157.50H718.64M722.18,150.00V165.00M720.18,157.50H722.18M722.18,157.50H724.18M727.72,150.00V165.00M725.72,157.50H727.72M727.72,151.00H729.72M733.25,123.70V153.70M731.25,151.00H733.25M733.25,140.50H735.25M738.79,132.00V149.00M736.79,140.50H738.79M738.79,148.00H740.79M744.32,145.00V161.00M742.32,148.00H744.32M744.32,155.35H746.32M749.86,147.00V163.70M747.86,155.35H749.86M749.86,149.35H751.86M755.40,135.00V163.70M753.40,149.35H755.40M755.40,136.00H757.40M760.93,121.00V143.70M758.93,136.00H760.93M760.93,134.50H762.93M766.47,126.00V143.00M764.47,134.50H766.47M766.47,133.50H768.47M772.00,127.00V140.00M770.00,133.50H772.00M772.00,128.75H774.00M777.54,119.50V138.00M775.54,128.75H777.54M777.54,125.75H779.54M783.08,119.50V132.00M781.08,125.75H783.08M783.08,120.50H785.08M788.61,113.00V122.00M786.61,120.50H788.61M788.61,116.50H790.61M794.15,112.00V121.00M792.15,116.50H794.15M794.15,113.00H796.15M799.68,97.00V121.00M797.68,113.00H799.68M799.68,109.10H801.68M805.22,99.50V118.70M803.22,109.10H805.22M805.22,113.00H807.22M810.76,104.00V122.00M808.76,113.00H810.76M810.76,111.00H812.76M816.29,102.00V120.00M814.29,111.00H816.29M816.29,119.00H818.29M821.83,117.00V132.00M819.83,119.00H821.83M821.83,131.00H823.83M827.36,122.00V140.00M825.36,131.00H827.36M827.36,133.50H829.36M832.90,125.00V142.00M830.90,133.50H832.90M832.90,128.50H834.90M838.44,120.00V137.00M836.44,128.50H838.44M838.44,125.35H840.44M843.97,118.70V132.00M841.97,125.35H843.97M843.97,120.00H845.97M849.51,113.00V127.00M847.51,120.00H849.51M849.51,119.00H851.51M855.04,112.00V126.00M853.04,119.00H855.04M855.04,125.00H857.04M860.58,121.00V134.50M858.58,125.00H860.58M860.58,124.85H862.58M866.12,118.70V131.00M864.12,124.85H866.12M866.12,127.85H868.12M871.65,123.70V132.00M869.65,127.85H871.65M871.65,124.70H873.65M877.19,104.50V127.00M875.19,124.70H877.19M877.19,115.00H879.19M882.72,105.00V125.00M880.72,115.00H882.72M882.72,118.00H884.72M888.26,111.00V125.00M886.26,118.00H888.26M888.26,120.50H890.26M893.80,115.00V126.00M891.80,120.50H893.80M893.80,125.00H895.80M899.33,121.00V155.00M897.33,125.00H899.33M899.33,139.00H901.33M904.87,130.00V148.00M902.87,139.00H904.87M904.87,131.00H906.87M910.40,124.50V137.00M908.40,131.00H910.40M910.40,134.00H912.40M915.94,128.00V140.00M913.94,134.00H915.94M915.94,130.35H917.94M921.48,127.00V133.70M919.48,130.35H921.48M921.48,130.35H923.48" stroke="#00c800" stroke-width="1.4" fill="none"/>
<path d="M10.20,111.70L6.20,115.30L10.20,118.90Z" fill="#f0b830" stroke="#fff" stroke-width=".7"/><path d="M0.00,115.30L3.20,112.10L6.00,114.10L6.00,116.50L3.20,118.50Z" fill="#109010" stroke="#fff" stroke-width=".8"/><rect x="2.00" y="118.70" width="4.5" height="1.3" fill="#2838e0"/><path d="M51.00,60.10L47.00,63.70L51.00,67.30Z" fill="#f0b830" stroke="#fff" stroke-width=".7"/><path d="M40.80,63.70L44.00,60.50L46.80,62.50L46.80,64.90L44.00,66.90Z" fill="#f01818" stroke="#fff" stroke-width=".8"/><rect x="42.80" y="67.10" width="4.5" height="1.3" fill="#2838e0"/><path d="M51.00,67.60L47.00,71.20L51.00,74.80Z" fill="#f0b830" stroke="#fff" stroke-width=".7"/><path d="M40.80,71.20L44.00,68.00L46.80,70.00L46.80,72.40L44.00,74.40Z" fill="#f01818" stroke="#fff" stroke-width=".8"/><rect x="42.80" y="74.60" width="4.5" height="1.3" fill="#2838e0"/><path d="M51.00,75.10L47.00,78.70L51.00,82.30Z" fill="#f0b830" stroke="#fff" stroke-width=".7"/><path d="M40.80,78.70L44.00,75.50L46.80,77.50L46.80,79.90L44.00,81.90Z" fill="#f01818" stroke="#fff" stroke-width=".8"/><rect x="42.80" y="82.10" width="4.5" height="1.3" fill="#2838e0"/><path d="M59.20,68.40L55.20,72.00L59.20,75.60Z" fill="#f0b830" stroke="#fff" stroke-width=".7"/><path d="M49.00,72.00L52.20,68.80L55.00,70.80L55.00,73.20L52.20,75.20Z" fill="#f01818" stroke="#fff" stroke-width=".8"/><rect x="51.00" y="75.40" width="4.5" height="1.3" fill="#2838e0"/><path d="M145.20,29.20L141.20,32.80L145.20,36.40Z" fill="#f0b830" stroke="#fff" stroke-width=".7"/><path d="M135.00,32.80L138.20,29.60L141.00,31.60L141.00,34.00L138.20,36.00Z" fill="#f01818" stroke="#fff" stroke-width=".8"/><rect x="137.00" y="36.20" width="4.5" height="1.3" fill="#2838e0"/><path d="M152.70,20.90L148.70,24.50L152.70,28.10Z" fill="#f0b830" stroke="#fff" stroke-width=".7"/><path d="M142.50,24.50L145.70,21.30L148.50,23.30L148.50,25.70L145.70,27.70Z" fill="#f01818" stroke="#fff" stroke-width=".8"/><rect x="144.50" y="27.90" width="4.5" height="1.3" fill="#2838e0"/><path d="M245.20,59.20L241.20,62.80L245.20,66.40Z" fill="#f0b830" stroke="#fff" stroke-width=".7"/><path d="M235.00,62.80L238.20,59.60L241.00,61.60L241.00,64.00L238.20,66.00Z" fill="#109010" stroke="#fff" stroke-width=".8"/><rect x="237.00" y="66.20" width="4.5" height="1.3" fill="#2838e0"/><path d="M245.20,65.90L241.20,69.50L245.20,73.10Z" fill="#f0b830" stroke="#fff" stroke-width=".7"/><path d="M235.00,69.50L238.20,66.30L241.00,68.30L241.00,70.70L238.20,72.70Z" fill="#109010" stroke="#fff" stroke-width=".8"/><rect x="237.00" y="72.90" width="4.5" height="1.3" fill="#2838e0"/><path d="M245.20,81.70L241.20,85.30L245.20,88.90Z" fill="#f0b830" stroke="#fff" stroke-width=".7"/><path d="M235.00,85.30L238.20,82.10L241.00,84.10L241.00,86.50L238.20,88.50Z" fill="#109010" stroke="#fff" stroke-width=".8"/><rect x="237.00" y="88.70" width="4.5" height="1.3" fill="#2838e0"/><path d="M252.70,65.10L248.70,68.70L252.70,72.30Z" fill="#f0b830" stroke="#fff" stroke-width=".7"/><path d="M242.50,68.70L245.70,65.50L248.50,67.50L248.50,69.90L245.70,71.90Z" fill="#109010" stroke="#fff" stroke-width=".8"/><rect x="244.50" y="72.10" width="4.5" height="1.3" fill="#2838e0"/><path d="M284.40,44.20L280.40,47.80L284.40,51.40Z" fill="#f0b830" stroke="#fff" stroke-width=".7"/><path d="M274.20,47.80L277.40,44.60L280.20,46.60L280.20,49.00L277.40,51.00Z" fill="#f01818" stroke="#fff" stroke-width=".8"/><rect x="276.20" y="51.20" width="4.5" height="1.3" fill="#2838e0"/><path d="M377.70,90.90L373.70,94.50L377.70,98.10Z" fill="#f0b830" stroke="#fff" stroke-width=".7"/><path d="M367.50,94.50L370.70,91.30L373.50,93.30L373.50,95.70L370.70,97.70Z" fill="#109010" stroke="#fff" stroke-width=".8"/><rect x="369.50" y="97.90" width="4.5" height="1.3" fill="#2838e0"/><path d="M377.70,98.40L373.70,102.00L377.70,105.60Z" fill="#f0b830" stroke="#fff" stroke-width=".7"/><path d="M367.50,102.00L370.70,98.80L373.50,100.80L373.50,103.20L370.70,105.20Z" fill="#109010" stroke="#fff" stroke-width=".8"/><rect x="369.50" y="105.40" width="4.5" height="1.3" fill="#2838e0"/><path d="M377.70,105.90L373.70,109.50L377.70,113.10Z" fill="#f0b830" stroke="#fff" stroke-width=".7"/><path d="M367.50,109.50L370.70,106.30L373.50,108.30L373.50,110.70L370.70,112.70Z" fill="#109010" stroke="#fff" stroke-width=".8"/><rect x="369.50" y="112.90" width="4.5" height="1.3" fill="#2838e0"/><path d="M377.70,113.40L373.70,117.00L377.70,120.60Z" fill="#f0b830" stroke="#fff" stroke-width=".7"/><path d="M367.50,117.00L370.70,113.80L373.50,115.80L373.50,118.20L370.70,120.20Z" fill="#109010" stroke="#fff" stroke-width=".8"/><rect x="369.50" y="120.40" width="4.5" height="1.3" fill="#2838e0"/><path d="M401.00,128.40L397.00,132.00L401.00,135.60Z" fill="#f0b830" stroke="#fff" stroke-width=".7"/><path d="M390.80,132.00L394.00,128.80L396.80,130.80L396.80,133.20L394.00,135.20Z" fill="#109010" stroke="#fff" stroke-width=".8"/><rect x="392.80" y="135.40" width="4.5" height="1.3" fill="#2838e0"/><path d="M494.90,189.20L490.90,192.80L494.90,196.40Z" fill="#f0b830" stroke="#fff" stroke-width=".7"/><path d="M484.70,192.80L487.90,189.60L490.70,191.60L490.70,194.00L487.90,196.00Z" fill="#109010" stroke="#fff" stroke-width=".8"/><rect x="486.70" y="196.20" width="4.5" height="1.3" fill="#2838e0"/><path d="M538.50,160.10L534.50,163.70L538.50,167.30Z" fill="#f0b830" stroke="#fff" stroke-width=".7"/><path d="M528.30,163.70L531.50,160.50L534.30,162.50L534.30,164.90L531.50,166.90Z" fill="#f01818" stroke="#fff" stroke-width=".8"/><rect x="530.30" y="167.10" width="4.5" height="1.3" fill="#2838e0"/><path d="M546.00,160.10L542.00,163.70L546.00,167.30Z" fill="#f0b830" stroke="#fff" stroke-width=".7"/><path d="M535.80,163.70L539.00,160.50L541.80,162.50L541.80,164.90L539.00,166.90Z" fill="#f01818" stroke="#fff" stroke-width=".8"/><rect x="537.80" y="167.10" width="4.5" height="1.3" fill="#2838e0"/><path d="M583.50,160.10L579.50,163.70L583.50,167.30Z" fill="#f0b830" stroke="#fff" stroke-width=".7"/><path d="M573.30,163.70L576.50,160.50L579.30,162.50L579.30,164.90L576.50,166.90Z" fill="#f01818" stroke="#fff" stroke-width=".8"/><rect x="575.30" y="167.10" width="4.5" height="1.3" fill="#2838e0"/><path d="M638.20,114.20L634.20,117.80L638.20,121.40Z" fill="#f0b830" stroke="#fff" stroke-width=".7"/><path d="M628.00,117.80L631.20,114.60L634.00,116.60L634.00,119.00L631.20,121.00Z" fill="#f01818" stroke="#fff" stroke-width=".8"/><rect x="630.00" y="121.20" width="4.5" height="1.3" fill="#2838e0"/><path d="M638.20,121.70L634.20,125.30L638.20,128.90Z" fill="#f0b830" stroke="#fff" stroke-width=".7"/><path d="M628.00,125.30L631.20,122.10L634.00,124.10L634.00,126.50L631.20,128.50Z" fill="#f01818" stroke="#fff" stroke-width=".8"/><rect x="630.00" y="128.70" width="4.5" height="1.3" fill="#2838e0"/><path d="M645.70,123.40L641.70,127.00L645.70,130.60Z" fill="#f0b830" stroke="#fff" stroke-width=".7"/><path d="M635.50,127.00L638.70,123.80L641.50,125.80L641.50,128.20L638.70,130.20Z" fill="#f01818" stroke="#fff" stroke-width=".8"/><rect x="637.50" y="130.40" width="4.5" height="1.3" fill="#2838e0"/><path d="M666.50,149.40L662.50,153.00L666.50,156.60Z" fill="#f0b830" stroke="#fff" stroke-width=".7"/><path d="M656.30,153.00L659.50,149.80L662.30,151.80L662.30,154.20L659.50,156.20Z" fill="#109010" stroke="#fff" stroke-width=".8"/><rect x="658.30" y="156.40" width="4.5" height="1.3" fill="#2838e0"/><path d="M666.50,156.90L662.50,160.50L666.50,164.10Z" fill="#f0b830" stroke="#fff" stroke-width=".7"/><path d="M656.30,160.50L659.50,157.30L662.30,159.30L662.30,161.70L659.50,163.70Z" fill="#109010" stroke="#fff" stroke-width=".8"/><rect x="658.30" y="163.90" width="4.5" height="1.3" fill="#2838e0"/><path d="M666.50,164.40L662.50,168.00L666.50,171.60Z" fill="#f0b830" stroke="#fff" stroke-width=".7"/><path d="M656.30,168.00L659.50,164.80L662.30,166.80L662.30,169.20L659.50,171.20Z" fill="#109010" stroke="#fff" stroke-width=".8"/><rect x="658.30" y="171.40" width="4.5" height="1.3" fill="#2838e0"/><path d="M666.50,171.90L662.50,175.50L666.50,179.10Z" fill="#f0b830" stroke="#fff" stroke-width=".7"/><path d="M656.30,175.50L659.50,172.30L662.30,174.30L662.30,176.70L659.50,178.70Z" fill="#109010" stroke="#fff" stroke-width=".8"/><rect x="658.30" y="178.90" width="4.5" height="1.3" fill="#2838e0"/><path d="M666.50,179.40L662.50,183.00L666.50,186.60Z" fill="#f0b830" stroke="#fff" stroke-width=".7"/><path d="M656.30,183.00L659.50,179.80L662.30,181.80L662.30,184.20L659.50,186.20Z" fill="#109010" stroke="#fff" stroke-width=".8"/><rect x="658.30" y="186.40" width="4.5" height="1.3" fill="#2838e0"/><path d="M688.20,160.10L684.20,163.70L688.20,167.30Z" fill="#f0b830" stroke="#fff" stroke-width=".7"/><path d="M678.00,163.70L681.20,160.50L684.00,162.50L684.00,164.90L681.20,166.90Z" fill="#109010" stroke="#fff" stroke-width=".8"/><rect x="680.00" y="167.10" width="4.5" height="1.3" fill="#2838e0"/><path d="M688.20,167.60L684.20,171.20L688.20,174.80Z" fill="#f0b830" stroke="#fff" stroke-width=".7"/><path d="M678.00,171.20L681.20,168.00L684.00,170.00L684.00,172.40L681.20,174.40Z" fill="#109010" stroke="#fff" stroke-width=".8"/><rect x="680.00" y="174.60" width="4.5" height="1.3" fill="#2838e0"/><path d="M688.20,175.10L684.20,178.70L688.20,182.30Z" fill="#f0b830" stroke="#fff" stroke-width=".7"/><path d="M678.00,178.70L681.20,175.50L684.00,177.50L684.00,179.90L681.20,181.90Z" fill="#109010" stroke="#fff" stroke-width=".8"/><rect x="680.00" y="182.10" width="4.5" height="1.3" fill="#2838e0"/><path d="M695.70,164.20L691.70,167.80L695.70,171.40Z" fill="#f0b830" stroke="#fff" stroke-width=".7"/><path d="M685.50,167.80L688.70,164.60L691.50,166.60L691.50,169.00L688.70,171.00Z" fill="#109010" stroke="#fff" stroke-width=".8"/><rect x="687.50" y="171.20" width="4.5" height="1.3" fill="#2838e0"/><path d="M742.40,130.10L738.40,133.70L742.40,137.30Z" fill="#f0b830" stroke="#fff" stroke-width=".7"/><path d="M732.20,133.70L735.40,130.50L738.20,132.50L738.20,134.90L735.40,136.90Z" fill="#f01818" stroke="#fff" stroke-width=".8"/><rect x="734.20" y="137.10" width="4.5" height="1.3" fill="#2838e0"/><path d="M742.40,137.60L738.40,141.20L742.40,144.80Z" fill="#f0b830" stroke="#fff" stroke-width=".7"/><path d="M732.20,141.20L735.40,138.00L738.20,140.00L738.20,142.40L735.40,144.40Z" fill="#f01818" stroke="#fff" stroke-width=".8"/><rect x="734.20" y="144.60" width="4.5" height="1.3" fill="#2838e0"/><path d="M742.40,145.10L738.40,148.70L742.40,152.30Z" fill="#f0b830" stroke="#fff" stroke-width=".7"/><path d="M732.20,148.70L735.40,145.50L738.20,147.50L738.20,149.90L735.40,151.90Z" fill="#f01818" stroke="#fff" stroke-width=".8"/><rect x="734.20" y="152.10" width="4.5" height="1.3" fill="#2838e0"/><path d="M750.70,145.90L746.70,149.50L750.70,153.10Z" fill="#f0b830" stroke="#fff" stroke-width=".7"/><path d="M740.50,149.50L743.70,146.30L746.50,148.30L746.50,150.70L743.70,152.70Z" fill="#f01818" stroke="#fff" stroke-width=".8"/><rect x="742.50" y="152.90" width="4.5" height="1.3" fill="#2838e0"/><path d="M731.50,152.60L727.50,156.20L731.50,159.80Z" fill="#f0b830" stroke="#fff" stroke-width=".7"/><path d="M721.30,156.20L724.50,153.00L727.30,155.00L727.30,157.40L724.50,159.40Z" fill="#f01818" stroke="#fff" stroke-width=".8"/><rect x="723.30" y="159.60" width="4.5" height="1.3" fill="#2838e0"/><path d="M731.50,160.10L727.50,163.70L731.50,167.30Z" fill="#f0b830" stroke="#fff" stroke-width=".7"/><path d="M721.30,163.70L724.50,160.50L727.30,162.50L727.30,164.90L724.50,166.90Z" fill="#f01818" stroke="#fff" stroke-width=".8"/><rect x="723.30" y="167.10" width="4.5" height="1.3" fill="#2838e0"/><path d="M820.70,105.90L816.70,109.50L820.70,113.10Z" fill="#f0b830" stroke="#fff" stroke-width=".7"/><path d="M810.50,109.50L813.70,106.30L816.50,108.30L816.50,110.70L813.70,112.70Z" fill="#f01818" stroke="#fff" stroke-width=".8"/><rect x="812.50" y="112.90" width="4.5" height="1.3" fill="#2838e0"/><path d="M820.70,113.40L816.70,117.00L820.70,120.60Z" fill="#f0b830" stroke="#fff" stroke-width=".7"/><path d="M810.50,117.00L813.70,113.80L816.50,115.80L816.50,118.20L813.70,120.20Z" fill="#f01818" stroke="#fff" stroke-width=".8"/><rect x="812.50" y="120.40" width="4.5" height="1.3" fill="#2838e0"/><path d="M843.20,120.90L839.20,124.50L843.20,128.10Z" fill="#f0b830" stroke="#fff" stroke-width=".7"/><path d="M833.00,124.50L836.20,121.30L839.00,123.30L839.00,125.70L836.20,127.70Z" fill="#109010" stroke="#fff" stroke-width=".8"/><rect x="835.00" y="127.90" width="4.5" height="1.3" fill="#2838e0"/><path d="M843.20,128.40L839.20,132.00L843.20,135.60Z" fill="#f0b830" stroke="#fff" stroke-width=".7"/><path d="M833.00,132.00L836.20,128.80L839.00,130.80L839.00,133.20L836.20,135.20Z" fill="#109010" stroke="#fff" stroke-width=".8"/><rect x="835.00" y="135.40" width="4.5" height="1.3" fill="#2838e0"/><path d="M851.50,119.20L847.50,122.80L851.50,126.40Z" fill="#f0b830" stroke="#fff" stroke-width=".7"/><path d="M841.30,122.80L844.50,119.60L847.30,121.60L847.30,124.00L844.50,126.00Z" fill="#109010" stroke="#fff" stroke-width=".8"/><rect x="843.30" y="126.20" width="4.5" height="1.3" fill="#2838e0"/>
</g>
<path d="M924,1h8l-4,4z" fill="#a8c0d8"/>
<text x="5" y="10.799999999999997" font-family="Liberation Sans" font-size="7" letter-spacing="-0.3" fill="#f0f0f0" style="white-space:pre">XAUUSD,H1  4001.045 4006.248 3995.955 4001.505</text>
<rect x="1161" y="2.5" width="1" height="335.1" fill="#d8d8d8"/>
<rect x="1163" y="128" width="6" height="10" fill="#f4f4f4"/>
<rect x="1164" y="16.60" width="4" height="4" fill="#8c9098"/>
<rect x="1164" y="39.40" width="4" height="4" fill="#8c9098"/>
<rect x="1164" y="62.20" width="4" height="4" fill="#8c9098"/>
<rect x="1164" y="85.00" width="4" height="4" fill="#8c9098"/>
<rect x="1164" y="107.80" width="4" height="4" fill="#8c9098"/>
<rect x="1164" y="130.60" width="4" height="4" fill="#8c9098"/>
<rect x="1164" y="153.40" width="4" height="4" fill="#8c9098"/>
<rect x="1164" y="176.20" width="4" height="4" fill="#8c9098"/>
<rect x="1164" y="199.00" width="4" height="4" fill="#8c9098"/>
<rect x="2.5" y="225" width="1166" height="1.4" fill="#9a9a9a"/>
<rect x="2.5" y="226.7" width="1166" height="1.3" fill="#e6e6e6"/>
<g clip-path="url(#ci)">
<path d="M24.50,228V337M46.50,228V337M68.50,228V337M90.50,228V337M112.50,228V337M135.50,228V337M157.50,228V337M179.50,228V337M201.50,228V337M223.50,228V337M245.50,228V337M267.50,228V337M289.50,228V337M312.50,228V337M334.50,228V337M356.50,228V337M378.50,228V337M400.50,228V337M422.50,228V337M444.50,228V337M467.50,228V337M489.50,228V337M511.50,228V337M533.50,228V337M555.50,228V337M577.50,228V337M599.50,228V337M622.50,228V337M644.50,228V337M666.50,228V337M688.50,228V337M710.50,228V337M732.50,228V337M754.50,228V337M777.50,228V337M799.50,228V337M821.50,228V337M843.50,228V337M865.50,228V337M887.50,228V337M909.50,228V337M932.50,228V337M954.50,228V337M976.50,228V337M998.50,228V337M1020.50,228V337M1042.50,228V337M1064.50,228V337M1087.50,228V337M1109.50,228V337M1131.50,228V337M1153.50,228V337" stroke="#8390a0" stroke-width="1" stroke-dasharray="1.7,2.45" fill="none"/>
<path d="M3.00,298.25 L8.00,302.00 L16.75,270.75 L24.25,247.00 L29.25,242.00 L35.50,244.50 L41.75,259.50 L46.75,279.50 L53.00,307.00 L58.00,310.00 L63.50,299.50 L69.25,279.50 L74.25,254.50 L80.50,257.00 L85.50,274.50 L91.75,282.50 L98.00,278.25 L103.00,274.50 L108.00,276.50 L113.00,273.25 L119.25,252.00 L124.25,240.75 L129.25,247.00 L135.50,258.25 L141.75,270.75 L148.00,285.75 L153.00,309.50 L158.00,308.25 L163.00,312.00 L169.25,299.50 L175.50,287.00 L179.25,284.00 L184.25,292.00 L191.75,308.25 L198.00,313.25 L201.75,314.50 L208.00,320.75 L213.00,325.75 L218.00,319.00 L224.25,320.00 L230.50,318.25 L235.50,317.00 L240.50,297.00 L246.75,265.75 L251.75,252.00 L258.00,245.75 L263.00,242.50 L268.00,248.25 L273.00,267.00 L279.25,304.50 L285.50,314.50 L290.50,314.00 L296.75,315.75 L303.00,310.75 L311.75,299.50 L318.00,303.25 L323.00,305.75 L330.50,289.50 L335.50,278.25 L340.50,272.00 L345.50,284.50 L351.75,304.50 L358.00,312.00 L363.00,318.25 L368.00,308.25 L374.25,307.00 L379.25,309.50 L384.25,319.50 L390.50,314.50 L395.50,302.00 L400.50,292.00 L406.75,286.50 L411.75,294.50 L418.00,304.50 L423.00,302.00 L429.25,267.00 L434.25,252.00 L439.25,264.50 L444.25,280.75 L450.50,308.25 L456.75,317.00 L461.75,327.00 L468.00,328.25 L473.00,332.50 L478.00,327.00 L484.25,315.75 L490.50,294.50 L496.75,279.50 L501.75,263.25 L506.75,249.50 L511.75,235.75 L518.00,240.75 L523.00,242.00 L528.00,249.50 L534.25,258.25 L539.25,283.25 L544.25,297.00 L549.25,279.50 L555.50,258.25 L561.75,240.75 L566.75,249.50 L573.00,260.75 L579.25,280.75 L584.25,289.00 L589.25,282.00 L595.50,249.50 L600.50,235.75 L605.50,234.00 L611.75,237.00 L618.00,243.25 L623.00,247.00 L629.25,267.00 L634.25,289.50 L638.00,309.50 L644.25,327.00 L650.50,324.50 L655.50,313.25 L660.50,311.50 L665.50,319.50 L671.75,321.50 L678.00,315.75 L683.00,302.00 L689.25,284.50 L694.25,292.00 L699.25,296.50 L705.50,282.00 L711.75,262.00 L716.75,248.25 L723.00,254.50 L728.00,249.50 L733.00,255.75 L739.25,262.00 L744.25,279.50 L750.50,307.00 L755.50,302.00 L760.50,289.50 L766.75,262.00 L773.00,258.25 L778.00,255.75 L783.00,252.00 L789.25,243.25 L794.25,236.50 L799.25,240.75 L804.25,247.00 L810.50,264.50 L816.75,284.50 L821.75,314.50 L828.00,322.00 L833.00,315.75 L838.00,312.00 L844.25,292.00 L849.25,272.00 L855.50,258.25 L860.50,274.50 L865.50,290.75 L871.75,297.00 L876.75,289.50 L883.00,283.25 L888.00,279.00 L893.00,289.50 L899.25,307.00 L904.25,309.50 L910.50,300.75 L915.50,287.00 L920.50,276.50" stroke="#0c8512" stroke-width="1.15" fill="none" stroke-linejoin="round"/>
<path d="M3.00,305.00 L8.00,302.00 L16.75,282.00 L24.25,257.00 L29.25,245.75 L35.50,243.25 L41.75,252.00 L48.00,267.00 L53.00,284.50 L58.00,299.50 L63.50,305.75 L69.25,298.25 L74.25,282.00 L80.50,265.75 L85.50,262.00 L91.75,272.00 L98.00,279.50 L103.00,278.25 L108.00,276.50 L113.00,274.50 L119.25,267.00 L124.25,257.00 L129.25,247.00 L135.50,248.25 L141.75,259.50 L148.00,272.00 L153.00,285.75 L158.00,298.25 L163.00,309.50 L169.25,304.50 L175.50,297.00 L181.75,289.50 L185.50,289.50 L191.75,297.00 L198.00,307.00 L203.00,313.25 L208.00,317.00 L213.00,320.75 L219.25,322.00 L224.25,320.75 L230.50,319.50 L235.50,318.25 L240.50,307.00 L246.75,284.50 L251.75,267.00 L258.00,252.00 L263.00,246.50 L268.00,247.50 L273.00,257.00 L279.25,279.50 L285.50,302.00 L290.50,313.25 L296.75,315.75 L303.00,314.50 L308.00,312.00 L318.00,303.25 L323.00,302.00 L329.25,298.25 L335.50,289.50 L341.75,280.75 L345.50,279.50 L351.75,289.50 L358.00,302.00 L363.00,310.75 L368.00,312.50 L374.25,309.50 L379.25,307.50 L385.50,312.00 L391.75,313.25 L396.75,310.75 L401.75,299.50 L406.75,293.25 L411.75,292.00 L416.75,297.00 L423.00,300.75 L428.00,292.00 L434.25,274.50 L439.25,263.25 L445.50,269.50 L451.75,289.50 L456.75,302.00 L461.75,317.00 L468.00,324.50 L473.00,330.00 L478.00,328.25 L484.25,319.50 L490.50,304.50 L496.75,287.00 L503.00,269.50 L509.25,254.50 L515.50,243.25 L521.75,240.75 L528.00,245.75 L534.25,253.25 L539.25,265.75 L544.25,279.50 L550.50,285.75 L555.50,279.50 L561.75,262.00 L566.75,249.50 L573.00,249.50 L579.25,269.50 L584.25,280.75 L589.25,282.00 L594.25,273.25 L599.25,255.75 L605.50,239.50 L611.75,235.75 L618.00,239.50 L623.00,243.25 L629.25,253.25 L634.25,267.00 L638.00,284.50 L644.25,309.50 L650.50,323.25 L655.50,322.00 L660.50,317.00 L666.75,314.50 L671.75,317.00 L678.00,318.25 L683.00,312.00 L689.25,298.25 L694.25,291.50 L699.25,292.00 L705.50,292.00 L711.75,280.75 L716.75,267.00 L723.00,254.50 L728.00,250.75 L733.00,253.25 L739.25,254.50 L744.25,263.25 L750.50,279.50 L755.50,295.75 L760.50,299.00 L766.75,285.75 L773.00,270.75 L778.00,260.75 L783.00,257.00 L789.25,252.00 L794.25,244.50 L799.25,241.50 L805.50,242.00 L810.50,249.50 L816.75,264.50 L821.75,287.00 L828.00,308.25 L833.00,317.00 L838.00,317.00 L844.25,303.25 L849.25,287.00 L855.50,273.25 L860.50,268.25 L865.50,274.50 L871.75,287.00 L876.75,291.50 L883.00,288.25 L888.00,283.25 L893.00,284.50 L899.25,293.25 L904.25,302.00 L910.50,305.75 L915.50,299.50 L920.50,289.50" stroke="#e01010" stroke-width="1.15" fill="none" stroke-linejoin="round"/>
</g>
<text x="5.5" y="236.5" font-family="Liberation Sans" font-size="7" letter-spacing="-0.27" fill="#f0f0f0">Stoch(5,3,3) 58.0906 46.8222</text>
<rect x="1164" y="228" width="4" height="5" fill="#a0a0a0"/>
<rect x="1164" y="329" width="4" height="5" fill="#a0a0a0"/>
<rect x="2.5" y="337.7" width="1159.5" height="1.2" fill="#d8d8d8"/>
<g font-family="Liberation Sans" font-size="7" letter-spacing="-0.22" fill="#f0f0f0"><text x="1.50" y="347.0">22 Oct 2025</text><rect x="1.80" y="337.5" width="1" height="3" fill="#d8d8d8"/><text x="45.70" y="347.0">23 Oct 00:00</text><rect x="46.00" y="337.5" width="1" height="3" fill="#d8d8d8"/><text x="89.98" y="347.0">23 Oct 08:00</text><rect x="90.28" y="337.5" width="1" height="3" fill="#d8d8d8"/><text x="134.26" y="347.0">23 Oct 16:00</text><rect x="134.56" y="337.5" width="1" height="3" fill="#d8d8d8"/><text x="178.54" y="347.0">24 Oct 01:00</text><rect x="178.84" y="337.5" width="1" height="3" fill="#d8d8d8"/><text x="222.82" y="347.0">24 Oct 09:00</text><rect x="223.12" y="337.5" width="1" height="3" fill="#d8d8d8"/><text x="267.10" y="347.0">24 Oct 17:00</text><rect x="267.40" y="337.5" width="1" height="3" fill="#d8d8d8"/><text x="311.38" y="347.0">27 Oct 02:00</text><rect x="311.68" y="337.5" width="1" height="3" fill="#d8d8d8"/><text x="355.66" y="347.0">27 Oct 10:00</text><rect x="355.96" y="337.5" width="1" height="3" fill="#d8d8d8"/><text x="399.94" y="347.0">27 Oct 18:00</text><rect x="400.24" y="337.5" width="1" height="3" fill="#d8d8d8"/><text x="444.22" y="347.0">28 Oct 03:00</text><rect x="444.52" y="337.5" width="1" height="3" fill="#d8d8d8"/><text x="488.50" y="347.0">28 Oct 11:00</text><rect x="488.80" y="337.5" width="1" height="3" fill="#d8d8d8"/><text x="532.78" y="347.0">28 Oct 19:00</text><rect x="533.08" y="337.5" width="1" height="3" fill="#d8d8d8"/><text x="577.06" y="347.0">29 Oct 04:00</text><rect x="577.36" y="337.5" width="1" height="3" fill="#d8d8d8"/><text x="621.34" y="347.0">29 Oct 12:00</text><rect x="621.64" y="337.5" width="1" height="3" fill="#d8d8d8"/><text x="665.62" y="347.0">29 Oct 20:00</text><rect x="665.92" y="337.5" width="1" height="3" fill="#d8d8d8"/><text x="709.90" y="347.0">30 Oct 05:00</text><rect x="710.20" y="337.5" width="1" height="3" fill="#d8d8d8"/><text x="754.18" y="347.0">30 Oct 13:00</text><rect x="754.48" y="337.5" width="1" height="3" fill="#d8d8d8"/><text x="798.46" y="347.0">30 Oct 22:00</text><rect x="798.76" y="337.5" width="1" height="3" fill="#d8d8d8"/><text x="842.74" y="347.0">31 Oct 06:00</text><rect x="843.04" y="337.5" width="1" height="3" fill="#d8d8d8"/><text x="887.02" y="347.0">31 Oct 14:00</text><rect x="887.32" y="337.5" width="1" height="3" fill="#d8d8d8"/></g>
</svg>
<div class="a" style="left:0px;top:424.7px;width:1280px;height:5px;background:#f0f0f0;"></div>
<div class="a" style="left:0px;top:429.2px;width:1280px;height:1px;background:#a9a9a9;"></div>
<div class="a" style="left:0px;top:430.2px;width:1280px;height:255px;background:#ffffff;"></div>
<div class="a" style="left:0px;top:430.2px;width:1280px;height:13.81px;background:#e9e9e9;"></div>
<div class="a" style="left:0px;top:443.41px;width:1280px;height:1px;background:#d2d2d2;"></div>
<div class="a" style="left:0px;top:457.82px;width:1280px;height:13.81px;background:#e9e9e9;"></div>
<div class="a" style="left:0px;top:457.22px;width:1280px;height:1px;background:#d2d2d2;"></div>
<div class="a" style="left:0px;top:471.03px;width:1280px;height:1px;background:#d2d2d2;"></div>
<div class="a" style="left:0px;top:485.44px;width:1280px;height:13.81px;background:#e9e9e9;"></div>
<div class="a" style="left:0px;top:484.84px;width:1280px;height:1px;background:#d2d2d2;"></div>
<div class="a" style="left:0px;top:498.65px;width:1280px;height:1px;background:#d2d2d2;"></div>
<div class="a" style="left:0px;top:513.06px;width:1280px;height:13.81px;background:#e9e9e9;"></div>
<div class="a" style="left:0px;top:512.46px;width:1280px;height:1px;background:#d2d2d2;"></div>
<div class="a" style="left:0px;top:526.27px;width:1280px;height:1px;background:#d2d2d2;"></div>
<div class="a" style="left:0px;top:540.68px;width:1280px;height:13.81px;background:#e9e9e9;"></div>
<div class="a" style="left:0px;top:540.08px;width:1280px;height:1px;background:#d2d2d2;"></div>
<div class="a" style="left:0px;top:553.89px;width:1280px;height:1px;background:#d2d2d2;"></div>
<div class="a" style="left:0px;top:568.3px;width:1280px;height:13.81px;background:#e9e9e9;"></div>
<div class="a" style="left:0px;top:567.7px;width:1280px;height:1px;background:#d2d2d2;"></div>
<div class="a" style="left:0px;top:581.51px;width:1280px;height:1px;background:#d2d2d2;"></div>
<div class="a" style="left:0px;top:595.92px;width:1280px;height:13.81px;background:#e9e9e9;"></div>
<div class="a" style="left:0px;top:595.32px;width:1280px;height:1px;background:#d2d2d2;"></div>
<div class="a" style="left:0px;top:609.13px;width:1280px;height:1px;background:#d2d2d2;"></div>
<svg style="left:0;top:0" width="1280" height="720" viewBox="0 0 1280 720"><defs><filter id="bl" x="-10%" y="-10%" width="130%" height="130%"><feGaussianBlur stdDeviation="0.9"/></filter></defs><g transform="translate(112,73)" opacity="0.06" filter="url(#bl)"><g transform="translate(42.20,405.50) scale(1.01)" fill="#000" stroke="none"><path d="M-34.5,40 L0,5.5 L34.5,40" fill="none" stroke="#000" stroke-width="7.5" stroke-linejoin="miter"/><path d="M-22.5,72 L-22.5,28 L-3,14 L-3,23 L-14.5,31.5 L-14.5,76 Z"/><path d="M22.5,72 L22.5,28 L4,14 L4,23 L14.5,31.5 L14.5,76 Z"/><path d="M-3,13 L4,13 L4,86 L0.5,91 L-3,86 Z"/><rect x="-15" y="43.5" width="30" height="8.5"/><text x="-47" y="111" font-family="Liberation Sans" font-size="16" font-weight="bold" stroke="#000" stroke-width="0.9" textLength="94" lengthAdjust="spacing">YOFOREX</text></g></g><g transform="translate(112,73)" opacity="0.05"><g transform="translate(41.00,404.00) scale(1.01)" fill="#000" stroke="none"><path d="M-34.5,40 L0,5.5 L34.5,40" fill="none" stroke="#000" stroke-width="7.5" stroke-linejoin="miter"/><path d="M-22.5,72 L-22.5,28 L-3,14 L-3,23 L-14.5,31.5 L-14.5,76 Z"/><path d="M22.5,72 L22.5,28 L4,14 L4,23 L14.5,31.5 L14.5,76 Z"/><path d="M-3,13 L4,13 L4,86 L0.5,91 L-3,86 Z"/><rect x="-15" y="43.5" width="30" height="8.5"/><text x="-47" y="111" font-family="Liberation Sans" font-size="16" font-weight="bold" stroke="#000" stroke-width="0.9" textLength="94" lengthAdjust="spacing">YOFOREX</text></g></g><g transform="translate(112,73)" opacity="0.06" filter="url(#bl)"><g transform="translate(407.90,405.70) scale(1.04)" fill="#000" stroke="none"><path d="M-34.5,40 L0,5.5 L34.5,40" fill="none" stroke="#000" stroke-width="7.5" stroke-linejoin="miter"/><path d="M-22.5,72 L-22.5,28 L-3,14 L-3,23 L-14.5,31.5 L-14.5,76 Z"/><path d="M22.5,72 L22.5,28 L4,14 L4,23 L14.5,31.5 L14.5,76 Z"/><path d="M-3,13 L4,13 L4,86 L0.5,91 L-3,86 Z"/><rect x="-15" y="43.5" width="30" height="8.5"/><text x="-47" y="111" font-family="Liberation Sans" font-size="16" font-weight="bold" stroke="#000" stroke-width="0.9" textLength="94" lengthAdjust="spacing">YOFOREX</text></g></g><g transform="translate(112,73)" opacity="0.05"><g transform="translate(406.70,404.20) scale(1.04)" fill="#000" stroke="none"><path d="M-34.5,40 L0,5.5 L34.5,40" fill="none" stroke="#000" stroke-width="7.5" stroke-linejoin="miter"/><path d="M-22.5,72 L-22.5,28 L-3,14 L-3,23 L-14.5,31.5 L-14.5,76 Z"/><path d="M22.5,72 L22.5,28 L4,14 L4,23 L14.5,31.5 L14.5,76 Z"/><path d="M-3,13 L4,13 L4,86 L0.5,91 L-3,86 Z"/><rect x="-15" y="43.5" width="30" height="8.5"/><text x="-47" y="111" font-family="Liberation Sans" font-size="16" font-weight="bold" stroke="#000" stroke-width="0.9" textLength="94" lengthAdjust="spacing">YOFOREX</text></g></g><g transform="translate(112,73)" opacity="0.06" filter="url(#bl)"><g transform="translate(720.70,406.50) scale(1.02)" fill="#000" stroke="none"><path d="M-34.5,40 L0,5.5 L34.5,40" fill="none" stroke="#000" stroke-width="7.5" stroke-linejoin="miter"/><path d="M-22.5,72 L-22.5,28 L-3,14 L-3,23 L-14.5,31.5 L-14.5,76 Z"/><path d="M22.5,72 L22.5,28 L4,14 L4,23 L14.5,31.5 L14.5,76 Z"/><path d="M-3,13 L4,13 L4,86 L0.5,91 L-3,86 Z"/><rect x="-15" y="43.5" width="30" height="8.5"/><text x="-47" y="111" font-family="Liberation Sans" font-size="16" font-weight="bold" stroke="#000" stroke-width="0.9" textLength="94" lengthAdjust="spacing">YOFOREX</text></g></g><g transform="translate(112,73)" opacity="0.05"><g transform="translate(719.50,405.00) scale(1.02)" fill="#000" stroke="none"><path d="M-34.5,40 L0,5.5 L34.5,40" fill="none" stroke="#000" stroke-width="7.5" stroke-linejoin="miter"/><path d="M-22.5,72 L-22.5,28 L-3,14 L-3,23 L-14.5,31.5 L-14.5,76 Z"/><path d="M22.5,72 L22.5,28 L4,14 L4,23 L14.5,31.5 L14.5,76 Z"/><path d="M-3,13 L4,13 L4,86 L0.5,91 L-3,86 Z"/><rect x="-15" y="43.5" width="30" height="8.5"/><text x="-47" y="111" font-family="Liberation Sans" font-size="16" font-weight="bold" stroke="#000" stroke-width="0.9" textLength="94" lengthAdjust="spacing">YOFOREX</text></g></g><g transform="translate(112,73)" opacity="0.06" filter="url(#bl)"><g transform="translate(1021.50,404.80) scale(1.03)" fill="#000" stroke="none"><path d="M-34.5,40 L0,5.5 L34.5,40" fill="none" stroke="#000" stroke-width="7.5" stroke-linejoin="miter"/><path d="M-22.5,72 L-22.5,28 L-3,14 L-3,23 L-14.5,31.5 L-14.5,76 Z"/><path d="M22.5,72 L22.5,28 L4,14 L4,23 L14.5,31.5 L14.5,76 Z"/><path d="M-3,13 L4,13 L4,86 L0.5,91 L-3,86 Z"/><rect x="-15" y="43.5" width="30" height="8.5"/><text x="-47" y="111" font-family="Liberation Sans" font-size="16" font-weight="bold" stroke="#000" stroke-width="0.9" textLength="94" lengthAdjust="spacing">YOFOREX</text></g></g><g transform="translate(112,73)" opacity="0.05"><g transform="translate(1020.30,403.30) scale(1.03)" fill="#000" stroke="none"><path d="M-34.5,40 L0,5.5 L34.5,40" fill="none" stroke="#000" stroke-width="7.5" stroke-linejoin="miter"/><path d="M-22.5,72 L-22.5,28 L-3,14 L-3,23 L-14.5,31.5 L-14.5,76 Z"/><path d="M22.5,72 L22.5,28 L4,14 L4,23 L14.5,31.5 L14.5,76 Z"/><path d="M-3,13 L4,13 L4,86 L0.5,91 L-3,86 Z"/><rect x="-15" y="43.5" width="30" height="8.5"/><text x="-47" y="111" font-family="Liberation Sans" font-size="16" font-weight="bold" stroke="#000" stroke-width="0.9" textLength="94" lengthAdjust="spacing">YOFOREX</text></g></g></svg>
<div class="a" style="left:-1.20px;top:432.32px;font-size:8.6px;letter-spacing:-0.1px;color:#1e1e1e;font-weight:normal;">Bars in test</div>
<div class="a" style="right:871.40px;top:432.32px;font-size:8.6px;letter-spacing:-0.42px;color:#1e1e1e;font-weight:normal;">1515</div>
<div class="a" style="left:442.50px;top:432.32px;font-size:8.6px;letter-spacing:-0.06px;color:#1e1e1e;font-weight:normal;">Ticks modelled</div>
<div class="a" style="right:424.70px;top:432.32px;font-size:8.6px;letter-spacing:-0.42px;color:#1e1e1e;font-weight:normal;">19797984</div>
<div class="a" style="left:889.30px;top:432.32px;font-size:8.6px;letter-spacing:-0.06px;color:#1e1e1e;font-weight:normal;">Modelling quality</div>
<div class="a" style="left:-1.20px;top:446.13px;font-size:8.6px;letter-spacing:-0.1px;color:#1e1e1e;font-weight:normal;">Mismatched charts errors</div>
<div class="a" style="right:871.40px;top:446.13px;font-size:8.6px;letter-spacing:-0.42px;color:#1e1e1e;font-weight:normal;">0</div>
<div class="a" style="left:441px;top:443.3px;width:839px;height:12.2px;background:#00ff00;border-top:1px solid #2aa0a0;border-bottom:1px solid #2aa0a0;border-left:1px solid #2aa0a0"></div>
<div class="a" style="left:-1.20px;top:459.94px;font-size:8.6px;letter-spacing:-0.1px;color:#1e1e1e;font-weight:normal;">Initial deposit</div>
<div class="a" style="right:871.40px;top:459.94px;font-size:8.6px;letter-spacing:-0.42px;color:#1e1e1e;font-weight:normal;">1000.00</div>
<div class="a" style="left:889.30px;top:459.94px;font-size:8.6px;letter-spacing:-0.06px;color:#1e1e1e;font-weight:normal;">Spread</div>
<div class="a" style="left:1260.70px;top:459.94px;font-size:8.6px;letter-spacing:-0.06px;color:#1e1e1e;font-weight:normal;">Curre</div>
<div class="a" style="left:-1.20px;top:473.75px;font-size:8.6px;letter-spacing:-0.1px;color:#1e1e1e;font-weight:normal;">Total net profit</div>
<div class="a" style="right:871.40px;top:473.75px;font-size:8.6px;letter-spacing:-0.42px;color:#1e1e1e;font-weight:normal;">96.40</div>
<div class="a" style="left:442.50px;top:473.75px;font-size:8.6px;letter-spacing:-0.06px;color:#1e1e1e;font-weight:normal;">Gross profit</div>
<div class="a" style="right:424.70px;top:473.75px;font-size:8.6px;letter-spacing:-0.42px;color:#1e1e1e;font-weight:normal;">1396.40</div>
<div class="a" style="left:889.30px;top:473.75px;font-size:8.6px;letter-spacing:-0.06px;color:#1e1e1e;font-weight:normal;">Gross loss</div>
<div class="a" style="left:1274.00px;top:473.75px;font-size:8.6px;letter-spacing:-0.42px;color:#1e1e1e;font-weight:normal;">-1</div>
<div class="a" style="left:-1.20px;top:487.56px;font-size:8.6px;letter-spacing:-0.1px;color:#1e1e1e;font-weight:normal;">Profit factor</div>
<div class="a" style="right:871.40px;top:487.56px;font-size:8.6px;letter-spacing:-0.42px;color:#1e1e1e;font-weight:normal;">1.07</div>
<div class="a" style="left:442.50px;top:487.56px;font-size:8.6px;letter-spacing:-0.06px;color:#1e1e1e;font-weight:normal;">Expected payoff</div>
<div class="a" style="right:424.70px;top:487.56px;font-size:8.6px;letter-spacing:-0.42px;color:#1e1e1e;font-weight:normal;">0.16</div>
<div class="a" style="left:-1.20px;top:501.37px;font-size:8.6px;letter-spacing:-0.1px;color:#1e1e1e;font-weight:normal;">Absolute drawdown</div>
<div class="a" style="right:871.40px;top:501.37px;font-size:8.6px;letter-spacing:-0.42px;color:#1e1e1e;font-weight:normal;">7.88</div>
<div class="a" style="left:442.50px;top:501.37px;font-size:8.6px;letter-spacing:-0.06px;color:#1e1e1e;font-weight:normal;">Maximal drawdown</div>
<div class="a" style="right:424.70px;top:501.37px;font-size:8.6px;letter-spacing:-0.42px;color:#1e1e1e;font-weight:normal;">123.10 (10.91%)</div>
<div class="a" style="left:889.30px;top:501.37px;font-size:8.6px;letter-spacing:-0.06px;color:#1e1e1e;font-weight:normal;">Relative drawdown</div>
<div class="a" style="left:1248.80px;top:501.37px;font-size:8.6px;letter-spacing:-0.42px;color:#1e1e1e;font-weight:normal;">10.91% (1</div>
<div class="a" style="left:-1.20px;top:515.18px;font-size:8.6px;letter-spacing:-0.1px;color:#1e1e1e;font-weight:normal;">Total trades</div>
<div class="a" style="right:871.40px;top:515.18px;font-size:8.6px;letter-spacing:-0.42px;color:#1e1e1e;font-weight:normal;">604</div>
<div class="a" style="left:442.50px;top:515.18px;font-size:8.6px;letter-spacing:-0.06px;color:#1e1e1e;font-weight:normal;">Short positions (won %)</div>
<div class="a" style="right:424.70px;top:515.18px;font-size:8.6px;letter-spacing:-0.42px;color:#1e1e1e;font-weight:normal;">397 (89.42%)</div>
<div class="a" style="left:889.30px;top:515.18px;font-size:8.6px;letter-spacing:-0.06px;color:#1e1e1e;font-weight:normal;">Long positions (won %)</div>
<div class="a" style="left:1258.00px;top:515.18px;font-size:8.6px;letter-spacing:-0.42px;color:#1e1e1e;font-weight:normal;">207 (8</div>
<div class="a" style="left:442.50px;top:528.99px;font-size:8.6px;letter-spacing:-0.06px;color:#1e1e1e;font-weight:normal;">Profit trades (% of total)</div>
<div class="a" style="right:424.70px;top:528.99px;font-size:8.6px;letter-spacing:-0.42px;color:#1e1e1e;font-weight:normal;">539 (89.24%)</div>
<div class="a" style="left:889.30px;top:528.99px;font-size:8.6px;letter-spacing:-0.06px;color:#1e1e1e;font-weight:normal;">Loss trades (% of total)</div>
<div class="a" style="left:1262.50px;top:528.99px;font-size:8.6px;letter-spacing:-0.42px;color:#1e1e1e;font-weight:normal;">65 (1</div>
<div class="a" style="right:871.40px;top:542.80px;font-size:8.6px;letter-spacing:-0.06px;color:#1e1e1e;font-weight:normal;">Largest</div>
<div class="a" style="left:442.50px;top:542.80px;font-size:8.6px;letter-spacing:-0.06px;color:#1e1e1e;font-weight:normal;">profit trade</div>
<div class="a" style="right:424.70px;top:542.80px;font-size:8.6px;letter-spacing:-0.42px;color:#1e1e1e;font-weight:normal;">10.00</div>
<div class="a" style="left:889.30px;top:542.80px;font-size:8.6px;letter-spacing:-0.06px;color:#1e1e1e;font-weight:normal;">loss trade</div>
<div class="a" style="right:871.40px;top:556.61px;font-size:8.6px;letter-spacing:-0.06px;color:#1e1e1e;font-weight:normal;">Average</div>
<div class="a" style="left:442.50px;top:556.61px;font-size:8.6px;letter-spacing:-0.06px;color:#1e1e1e;font-weight:normal;">profit trade</div>
<div class="a" style="right:424.70px;top:556.61px;font-size:8.6px;letter-spacing:-0.42px;color:#1e1e1e;font-weight:normal;">2.59</div>
<div class="a" style="left:889.30px;top:556.61px;font-size:8.6px;letter-spacing:-0.06px;color:#1e1e1e;font-weight:normal;">loss trade</div>
<div class="a" style="right:871.40px;top:570.42px;font-size:8.6px;letter-spacing:-0.06px;color:#1e1e1e;font-weight:normal;">Maximum</div>
<div class="a" style="left:442.50px;top:570.42px;font-size:8.6px;letter-spacing:-0.06px;color:#1e1e1e;font-weight:normal;">consecutive wins (profit in money)</div>
<div class="a" style="right:424.70px;top:570.42px;font-size:8.6px;letter-spacing:-0.42px;color:#1e1e1e;font-weight:normal;">35 (76.84)</div>
<div class="a" style="left:889.30px;top:570.42px;font-size:8.6px;letter-spacing:-0.06px;color:#1e1e1e;font-weight:normal;">consecutive losses (loss in money)</div>
<div class="a" style="left:1270.50px;top:570.42px;font-size:8.6px;letter-spacing:-0.42px;color:#1e1e1e;font-weight:normal;">2 (-</div>
<div class="a" style="right:871.40px;top:584.23px;font-size:8.6px;letter-spacing:-0.06px;color:#1e1e1e;font-weight:normal;">Maximal</div>
<div class="a" style="left:442.50px;top:584.23px;font-size:8.6px;letter-spacing:-0.06px;color:#1e1e1e;font-weight:normal;">consecutive profit (count of wins)</div>
<div class="a" style="right:424.70px;top:584.23px;font-size:8.6px;letter-spacing:-0.42px;color:#1e1e1e;font-weight:normal;">87.44 (22)</div>
<div class="a" style="left:889.30px;top:584.23px;font-size:8.6px;letter-spacing:-0.06px;color:#1e1e1e;font-weight:normal;">consecutive loss (count of losses)</div>
<div class="a" style="left:1270.00px;top:584.23px;font-size:8.6px;letter-spacing:-0.42px;color:#1e1e1e;font-weight:normal;">-40</div>
<div class="a" style="right:871.40px;top:598.04px;font-size:8.6px;letter-spacing:-0.06px;color:#1e1e1e;font-weight:normal;">Average</div>
<div class="a" style="left:442.50px;top:598.04px;font-size:8.6px;letter-spacing:-0.06px;color:#1e1e1e;font-weight:normal;">consecutive wins</div>
<div class="a" style="right:424.70px;top:598.04px;font-size:8.6px;letter-spacing:-0.42px;color:#1e1e1e;font-weight:normal;">9</div>
<div class="a" style="left:889.30px;top:598.04px;font-size:8.6px;letter-spacing:-0.06px;color:#1e1e1e;font-weight:normal;">consecutive losses</div>
<div class="a" style="left:0px;top:684.5px;width:1280px;height:1.2px;background:#8a8a8a;"></div>
<div class="a" style="left:0px;top:685.7px;width:1280px;height:16px;background:#f0f0f0;"></div>
<div class="a" style="left:112.8px;top:684.5px;width:37.7px;height:15.3px;background:#ffffff;border:1.2px solid #555;border-top:none"></div>
<div class="a" style="left:1.50px;top:688.05px;font-size:8.8px;letter-spacing:-0.15px;color:#888;font-weight:normal;">Settings</div>
<div class="a" style="left:44.00px;top:688.05px;font-size:8.8px;letter-spacing:-0.15px;color:#888;font-weight:normal;">Results</div>
<div class="a" style="left:83.30px;top:688.05px;font-size:8.8px;letter-spacing:-0.15px;color:#888;font-weight:normal;">Graph</div>
<div class="a" style="left:119.00px;top:688.05px;font-size:8.8px;letter-spacing:-0.15px;color:#1e1e1e;font-weight:normal;">Report</div>
<div class="a" style="left:157.00px;top:688.05px;font-size:8.8px;letter-spacing:-0.15px;color:#888;font-weight:normal;">Journal</div>
<div class="a" style="left:37px;top:689px;width:1px;height:8.5px;background:#aaaaaa;"></div>
<div class="a" style="left:76.5px;top:689px;width:1px;height:8.5px;background:#aaaaaa;"></div>
<div class="a" style="left:190.5px;top:689px;width:1px;height:8.5px;background:#aaaaaa;"></div>
<div class="a" style="left:0px;top:702px;width:1280px;height:1px;background:#c6c6c6;"></div>
<div class="a" style="left:0px;top:703px;width:1280px;height:11px;background:#f0f0f0;"></div>
<div class="a" style="left:-1.50px;top:709.05px;font-size:8.8px;letter-spacing:-0.15px;color:#1e1e1e;font-weight:normal;">Help, press F1</div>
<div class="a" style="left:816.5px;top:706px;width:1px;height:8px;background:#9a9a9a;"></div>
<div class="a" style="left:897px;top:706px;width:1px;height:8px;background:#9a9a9a;"></div>
<div class="a" style="left:967.5px;top:706px;width:1px;height:8px;background:#9a9a9a;"></div>
<div class="a" style="left:1016px;top:706px;width:1px;height:8px;background:#9a9a9a;"></div>
<div class="a" style="left:1065px;top:706px;width:1px;height:8px;background:#9a9a9a;"></div>
<div class="a" style="left:1112.5px;top:706px;width:1px;height:8px;background:#9a9a9a;"></div>
<div class="a" style="left:1161px;top:706px;width:1px;height:8px;background:#9a9a9a;"></div>
<div class="a" style="left:1207.5px;top:706px;width:1px;height:8px;background:#9a9a9a;"></div>
<div class="a" style="left:821.00px;top:709.05px;font-size:8.8px;letter-spacing:-0.15px;color:#1e1e1e;font-weight:normal;">Default</div>
<svg style="left:1210px;top:706px" width="17" height="8" viewBox="0 0 17 8"><path d="M1 8V1M3 8V1M5 8V1M7 8V1M9 8V3M11 8V3M13 8V3M15 8V3" stroke="#5a9a2a" stroke-width="1.2"/><path d="M9 8V4M11 8V4M13 8V4M15 8V4" stroke="#2a5aa0" stroke-width="1.2"/></svg>
<div class="a" style="left:1229.00px;top:709.05px;font-size:8.8px;letter-spacing:-0.15px;color:#1e1e1e;font-weight:normal;">1066/2 kb</div>
<div class="a" style="left:0px;top:714px;width:1280px;height:6px;background:#dcdcea;"></div>
<div class="a" style="left:0px;top:716px;width:5px;height:4px;background:#d03030;border-radius:2px"></div>
<div class="a" style="left:735px;top:717px;width:26px;height:3px;background:#e8a0a0;"></div>
<div class="a" style="left:765px;top:717px;width:25px;height:3px;background:#f4f4f8;"></div>
<div class="a" style="left:842px;top:717px;width:6px;height:3px;background:#e0a040;"></div>
<div class="a" style="left:874px;top:717px;width:6px;height:3px;background:#ffffff;"></div>
</body></html>
